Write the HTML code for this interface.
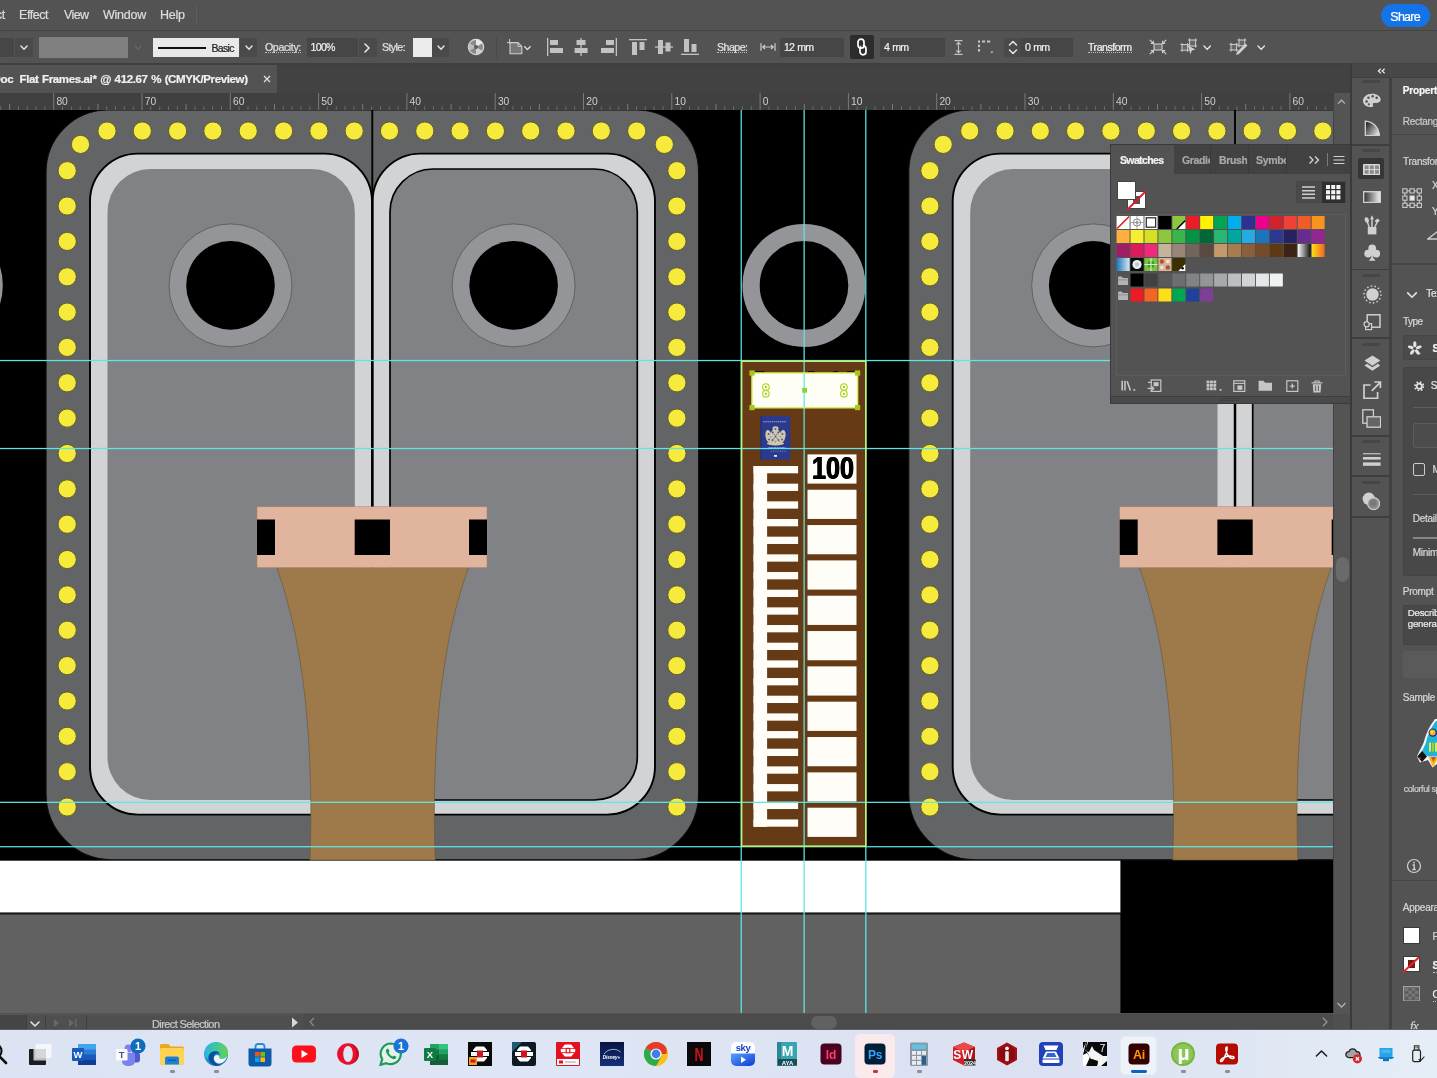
<!DOCTYPE html>
<html lang="en"><head><meta charset="utf-8"><title>Flat Frames.ai</title>
<style>
html,body{margin:0;padding:0}
body{width:1437px;height:1078px;position:relative;overflow:hidden;background:#535353;font-family:"Liberation Sans",sans-serif;color:#dcdcdc;font-size:12px;will-change:transform}
.abs{position:absolute}
div,span,svg{position:absolute;box-sizing:border-box}
.t{white-space:nowrap;line-height:1;-webkit-text-stroke:0.22px}

</style></head>
<body>
<div id="menubar" style="left:0;top:0;width:1437px;height:30px;background:#535353"></div>
<span class="t" style="right:1432.3px;top:8.5px;font-size:12.5px;color:#dcdcdc;letter-spacing:-0.4px">Select</span>
<span class="t" style="left:19px;top:8.5px;font-size:12.5px;color:#dcdcdc;font-weight:normal;letter-spacing:-0.446px;">Effect</span>
<span class="t" style="left:64px;top:8.5px;font-size:12.5px;color:#dcdcdc;font-weight:normal;letter-spacing:-0.622px;">View</span>
<span class="t" style="left:103px;top:8.5px;font-size:12.5px;color:#dcdcdc;font-weight:normal;letter-spacing:-0.231px;">Window</span>
<span class="t" style="left:160px;top:8.5px;font-size:12.5px;color:#dcdcdc;font-weight:normal;letter-spacing:-0.236px;">Help</span>
<div style="left:196px;top:6px;width:1px;height:18px;background:#5e5e5e"></div>
<div style="left:1381px;top:4px;width:49px;height:23px;border-radius:12px;background:#1473e6"></div>
<span class="t" style="left:1390.3px;top:10.7px;font-size:12.5px;color:#ffffff;font-weight:normal;letter-spacing:-0.738px;">Share</span>
<div style="left:0;top:29.6px;width:1437px;height:1.1px;background:#434343"></div>
<div id="controlbar" style="left:0;top:31px;width:1437px;height:34px;background:#535353"></div>
<div style="left:0px;top:38px;width:14px;height:19px;background:#464646;"></div>
<div style="left:15px;top:38px;width:18px;height:19px;background:#4a4a4a;"></div>
<svg style="left:18.5px;top:44.35px" width="10" height="7.3" viewBox="0 0 10 7.3"><path d="M2 2 L5.0 5.3 L8 2" fill="none" stroke="#e6e6e6" stroke-width="1.4" stroke-linecap="round" stroke-linejoin="round"/></svg>
<div style="left:38.5px;top:37.2px;width:89.6px;height:20.6px;background:#808080;"></div>
<svg style="left:133.0px;top:43.85px" width="10" height="7.3" viewBox="0 0 10 7.3"><path d="M2 2 L5.0 5.3 L8 2" fill="none" stroke="#666666" stroke-width="1.4" stroke-linecap="round" stroke-linejoin="round"/></svg>
<div style="left:153px;top:38px;width:86px;height:19px;background:#e9e9e9;"></div>
<div style="left:158px;top:46.5px;width:48px;height:2px;background:#101010;"></div>
<span class="t" style="left:211.5px;top:42.5px;font-size:10.5px;color:#222;font-weight:normal;letter-spacing:-0.669px;">Basic</span>
<div style="left:240px;top:38px;width:17px;height:19px;background:#4a4a4a;"></div>
<svg style="left:243.5px;top:44.35px" width="10" height="7.3" viewBox="0 0 10 7.3"><path d="M2 2 L5.0 5.3 L8 2" fill="none" stroke="#e6e6e6" stroke-width="1.4" stroke-linecap="round" stroke-linejoin="round"/></svg>
<span class="t" style="left:265px;top:41.7px;font-size:10.6px;color:#e0e0e0;font-weight:normal;letter-spacing:-0.368px;border-bottom:1px dotted #bbb;padding-bottom:0px">Opacity:</span>
<div style="left:307px;top:38px;width:51px;height:19px;background:#464646;"></div>
<span class="t" style="left:310.5px;top:41.7px;font-size:10.6px;color:#efefef;font-weight:normal;letter-spacing:-0.703px;">100%</span>
<div style="left:359px;top:38px;width:18px;height:19px;background:#4a4a4a;"></div>
<svg style="left:362.5px;top:41.5px" width="8" height="12" viewBox="0 0 8 12"><path d="M2 2 L6 6.0 L2 10" fill="none" stroke="#e6e6e6" stroke-width="1.6" stroke-linecap="round" stroke-linejoin="round"/></svg>
<span class="t" style="left:382px;top:41.7px;font-size:10.6px;color:#e0e0e0;font-weight:normal;letter-spacing:-0.582px;">Style:</span>
<div style="left:413px;top:38px;width:19px;height:19px;background:#ebebeb;"></div>
<div style="left:432px;top:38px;width:17px;height:19px;background:#4a4a4a;"></div>
<svg style="left:436.0px;top:44.35px" width="10" height="7.3" viewBox="0 0 10 7.3"><path d="M2 2 L5.0 5.3 L8 2" fill="none" stroke="#e6e6e6" stroke-width="1.4" stroke-linecap="round" stroke-linejoin="round"/></svg>
<svg style="left:467px;top:38px" width="18" height="18" viewBox="0 0 18 18"><circle cx="9" cy="9" r="7.6" fill="#8a8a8a" stroke="#d8d8d8" stroke-width="1.3"/><path d="M9 9 L9 1.6 A7.4 7.4 0 0 1 15.4 5.3 Z" fill="#e8e8e8"/><path d="M9 9 L15.4 12.7 A7.4 7.4 0 0 1 9 16.4 Z" fill="#cfcfcf"/><path d="M9 9 L2.6 12.7 A7.4 7.4 0 0 1 2.6 5.3 Z" fill="#bdbdbd"/><circle cx="9" cy="9" r="2" fill="#5a5a5a"/></svg>
<div style="left:495.5px;top:36px;width:1px;height:23px;background:#4b4b4b;"></div>
<svg style="left:505px;top:37px" width="30" height="20" viewBox="0 0 30 20"><path d="M5 5.6 H13 L16.8 9.4 V16.7 H5 Z" fill="#777" stroke="#cdcdcd" stroke-width="1.1"/><path d="M13 5.6 V9.4 H16.8" fill="none" stroke="#cdcdcd" stroke-width="0.9"/><path d="M2 5.6 h4 M4.6 2 v4.6" stroke="#cdcdcd" stroke-width="1"/><path d="M19.2 9.3 L22.4 12.5 L25.6 9.3" fill="none" stroke="#dadada" stroke-width="1.3"/></svg>
<svg style="left:547px;top:37.8px" width="18" height="18" viewBox="0 0 18 18"><rect x="0" y="0" width="1.3" height="18" fill="#c2c2c2"/><rect x="3" y="2" width="8" height="5" fill="#c2c2c2"/><rect x="3" y="10" width="13" height="5" fill="#c2c2c2"/></svg>
<svg style="left:573px;top:37.8px" width="18" height="18" viewBox="0 0 18 18"><rect x="7.4" y="0" width="1.3" height="18" fill="#c2c2c2"/><rect x="3.5" y="2" width="9" height="5" fill="#c2c2c2"/><rect x="1.6" y="10" width="13" height="5" fill="#c2c2c2"/></svg>
<svg style="left:600.6px;top:37.8px" width="18" height="18" viewBox="0 0 18 18"><rect x="14.7" y="0" width="1.3" height="18" fill="#c2c2c2"/><rect x="5" y="2" width="8" height="5" fill="#c2c2c2"/><rect x="0" y="10" width="13" height="5" fill="#c2c2c2"/></svg>
<svg style="left:629px;top:39px" width="18" height="18" viewBox="0 0 18 18"><rect x="0" y="0" width="18" height="1.3" fill="#c2c2c2"/><rect x="3" y="3" width="5" height="13" fill="#c2c2c2"/><rect x="10.5" y="3" width="5" height="8" fill="#c2c2c2"/></svg>
<svg style="left:655px;top:38.2px" width="18" height="18" viewBox="0 0 18 18"><rect x="0" y="8.4" width="18" height="1.3" fill="#c2c2c2"/><rect x="3" y="2" width="5" height="14" fill="#c2c2c2"/><rect x="10.5" y="4.5" width="5" height="9" fill="#c2c2c2"/></svg>
<svg style="left:681px;top:37px" width="18" height="18" viewBox="0 0 18 18"><rect x="0" y="16.7" width="18" height="1.3" fill="#c2c2c2"/><rect x="3" y="2" width="5" height="13" fill="#c2c2c2"/><rect x="10.5" y="7" width="5" height="8" fill="#c2c2c2"/></svg>
<span class="t" style="left:717px;top:41.7px;font-size:10.6px;color:#e0e0e0;font-weight:normal;letter-spacing:-0.519px;border-bottom:1px dotted #bbb;padding-bottom:0px">Shape:</span>
<svg style="left:759.5px;top:42.8px" width="16" height="8" viewBox="0 0 16 8"><path d="M1 0.3 V7.7 M15 0.3 V7.7 M2.5 4 H13.5 M5 1.8 L2.8 4 L5 6.2 M11 1.8 L13.2 4 L11 6.2" fill="none" stroke="#d0d0d0" stroke-width="1.2"/></svg>
<div style="left:780px;top:38px;width:64px;height:19px;background:#464646;"></div>
<span class="t" style="left:784px;top:41.7px;font-size:10.6px;color:#efefef;font-weight:normal;letter-spacing:-0.973px;;word-spacing:1.5px">12 mm</span>
<div style="left:850px;top:35px;width:24px;height:24px;background:#2c2c2c;border-radius:2px"></div>
<svg style="left:855px;top:38px" width="14" height="18" viewBox="0 0 14 18"><rect x="3" y="1.2" width="6" height="9" rx="3" fill="none" stroke="#fff" stroke-width="1.7"/><rect x="5" y="7.8" width="6" height="9" rx="3" fill="none" stroke="#fff" stroke-width="1.7"/><rect x="6.2" y="6.6" width="1.6" height="2.4" fill="#2c2c2c"/></svg>
<div style="left:880px;top:38px;width:65px;height:19px;background:#464646;"></div>
<span class="t" style="left:884px;top:41.7px;font-size:10.6px;color:#efefef;font-weight:normal;letter-spacing:-0.999px;;word-spacing:1.5px">4 mm</span>
<svg style="left:954px;top:40px" width="9" height="15" viewBox="0 0 9 15"><path d="M0.5 0.6 H8.5 M0.5 14.4 H8.5 M4.5 2.2 V12.8 M2.3 4.6 L4.5 2.4 L6.7 4.6 M2.3 10.4 L4.5 12.6 L6.7 10.4" fill="none" stroke="#c4c4c4" stroke-width="1.1"/></svg>
<svg style="left:977px;top:39px" width="18" height="17" viewBox="0 0 18 17"><g fill="#c4c4c4"><rect x="1" y="1.5" width="2" height="2.2"/><rect x="1" y="5.6" width="2" height="2.6"/><rect x="1" y="10" width="2" height="2.6"/><rect x="5" y="1.5" width="3" height="2"/><rect x="10" y="1.5" width="3.2" height="2"/><path d="M13.4 12.6 h3 l-1.5 2 z"/></g></svg>
<div style="left:1004px;top:38px;width:17px;height:19px;background:#4a4a4a;"></div>
<svg style="left:1007px;top:39px" width="12" height="17" viewBox="0 0 12 17"><path d="M2.5 6 L6 2.5 L9.5 6 M2.5 11 L6 14.5 L9.5 11" fill="none" stroke="#e6e6e6" stroke-width="1.5" stroke-linecap="round" stroke-linejoin="round"/></svg>
<div style="left:1021px;top:38px;width:52px;height:19px;background:#464646;"></div>
<span class="t" style="left:1025px;top:41.7px;font-size:10.6px;color:#efefef;font-weight:normal;letter-spacing:-0.999px;;word-spacing:1.5px">0 mm</span>
<span class="t" style="left:1088px;top:41.7px;font-size:10.6px;color:#f2f2f2;font-weight:normal;letter-spacing:-0.487px;border-bottom:1px dotted #bbb;padding-bottom:0px">Transform</span>
<svg style="left:1149px;top:39px" width="18" height="16" viewBox="0 0 18 16"><rect x="5" y="5" width="8" height="6" fill="#6e6e6e" stroke="#d0d0d0" stroke-width="1.1"/><path d="M0.8 0.8 L4.4 4.4 M17.2 0.8 L13.6 4.4 M0.8 15.2 L4.4 11.6 M17.2 15.2 L13.6 11.6" stroke="#d0d0d0" stroke-width="1.2"/><path d="M1.8 4.4 H4.4 V1.8 M16.2 4.4 H13.6 V1.8 M1.8 11.6 H4.4 V14.2 M16.2 11.6 H13.6 V14.2" fill="none" stroke="#d0d0d0" stroke-width="1.1"/></svg>
<svg style="left:1179px;top:37px" width="20" height="20" viewBox="0 0 20 20"><rect x="3" y="7.6" width="5.6" height="5.6" fill="#666" stroke="#d0d0d0" stroke-width="1"/><path d="M1.4 7.6 h1.6 M3 6.0 v1.6 M8.6 6.0 v1.6 M8.6 7.6 h1.6 M1.4 13.2 h1.6 M3 13.2 v1.6 M8.6 13.2 h1.6 M8.6 13.2 v1.6" stroke="#d0d0d0" stroke-width="0.9"/><rect x="10.6" y="3" width="6" height="6" fill="#666" stroke="#d0d0d0" stroke-width="1"/><path d="M9.0 3 h1.6 M10.6 1.4 v1.6 M16.6 1.4 v1.6 M16.6 3 h1.6 M9.0 9 h1.6 M10.6 9 v1.6 M16.6 9 h1.6 M16.6 9 v1.6" stroke="#d0d0d0" stroke-width="0.9"/><path d="M9 8.4 L16.4 12.6 L12.8 13.4 L11.4 17.2 Z" fill="#d0d0d0"/></svg>
<svg style="left:1201.8px;top:43.8px" width="10.4" height="7.4" viewBox="0 0 10.4 7.4"><path d="M2 2 L5.2 5.4 L8.4 2" fill="none" stroke="#e6e6e6" stroke-width="1.4" stroke-linecap="round" stroke-linejoin="round"/></svg>
<svg style="left:1228px;top:37px" width="22" height="20" viewBox="0 0 22 20"><rect x="3" y="7.4" width="5.6" height="5.6" fill="#666" stroke="#d0d0d0" stroke-width="1"/><path d="M1.4 7.4 h1.6 M3 5.800000000000001 v1.6 M8.6 5.800000000000001 v1.6 M8.6 7.4 h1.6 M1.4 13.0 h1.6 M3 13.0 v1.6 M8.6 13.0 h1.6 M8.6 13.0 v1.6" stroke="#d0d0d0" stroke-width="0.9"/><rect x="11" y="3" width="5.8" height="5.8" fill="#666" stroke="#d0d0d0" stroke-width="1"/><path d="M9.4 3 h1.6 M11 1.4 v1.6 M16.8 1.4 v1.6 M16.8 3 h1.6 M9.4 8.8 h1.6 M11 8.8 v1.6 M16.8 8.8 h1.6 M16.8 8.8 v1.6" stroke="#d0d0d0" stroke-width="0.9"/><path d="M17.4 6.6 L19.4 8.6 L11 17 L8 18 L9 15 Z" fill="#d0d0d0"/></svg>
<svg style="left:1255.8px;top:43.8px" width="10.4" height="7.4" viewBox="0 0 10.4 7.4"><path d="M2 2 L5.2 5.4 L8.4 2" fill="none" stroke="#e6e6e6" stroke-width="1.4" stroke-linecap="round" stroke-linejoin="round"/></svg>
<div style="left:0px;top:63px;width:1437px;height:31px;background:#424242;"></div>
<div style="left:0px;top:63px;width:1352px;height:1.6px;background:#3f3f3f;"></div>
<div style="left:0px;top:64.6px;width:277px;height:29px;background:#535353;"></div>
<span class="t" style="left:-7.6px;top:74.4px;font-size:11.5px;color:#f0f0f0;font-weight:bold;letter-spacing:-0.3px;">Doc</span>
<span class="t" style="left:19.5px;top:74.4px;font-size:11.5px;color:#f0f0f0;font-weight:bold;letter-spacing:-0.372px;;word-spacing:0.8px">Flat Frames.ai* @ 412.67 % (CMYK/Preview)</span>
<svg style="left:263.4px;top:75.3px" width="8" height="8" viewBox="0 0 8 8"><path d="M1 1 L7 7 M7 1 L1 7" stroke="#e4e4e4" stroke-width="1.15"/></svg>
<div style="left:0px;top:93.4px;width:1333px;height:16.6px;background:#404040;"></div>
<svg style="left:0;top:93px" width="1333" height="17" viewBox="0 0 1333 17"><rect x="0.2" y="13.5" width="1" height="3.5" fill="#6e6e6e"/><rect x="9.1" y="11" width="1" height="6" fill="#7a7a7a"/><rect x="17.9" y="13.5" width="1" height="3.5" fill="#6e6e6e"/><rect x="26.7" y="13.5" width="1" height="3.5" fill="#6e6e6e"/><rect x="35.5" y="13.5" width="1" height="3.5" fill="#6e6e6e"/><rect x="44.4" y="13.5" width="1" height="3.5" fill="#6e6e6e"/><rect x="53.2" y="0" width="1" height="17" fill="#7a7a7a"/><text x="56.4" y="11.9" font-size="10.3" fill="#cfcfcf" font-family="Liberation Sans, sans-serif">80</text><rect x="62.0" y="13.5" width="1" height="3.5" fill="#6e6e6e"/><rect x="70.9" y="13.5" width="1" height="3.5" fill="#6e6e6e"/><rect x="79.7" y="13.5" width="1" height="3.5" fill="#6e6e6e"/><rect x="88.5" y="13.5" width="1" height="3.5" fill="#6e6e6e"/><rect x="97.4" y="11" width="1" height="6" fill="#7a7a7a"/><rect x="106.2" y="13.5" width="1" height="3.5" fill="#6e6e6e"/><rect x="115.0" y="13.5" width="1" height="3.5" fill="#6e6e6e"/><rect x="123.8" y="13.5" width="1" height="3.5" fill="#6e6e6e"/><rect x="132.7" y="13.5" width="1" height="3.5" fill="#6e6e6e"/><rect x="141.5" y="0" width="1" height="17" fill="#7a7a7a"/><text x="144.7" y="11.9" font-size="10.3" fill="#cfcfcf" font-family="Liberation Sans, sans-serif">70</text><rect x="150.3" y="13.5" width="1" height="3.5" fill="#6e6e6e"/><rect x="159.2" y="13.5" width="1" height="3.5" fill="#6e6e6e"/><rect x="168.0" y="13.5" width="1" height="3.5" fill="#6e6e6e"/><rect x="176.8" y="13.5" width="1" height="3.5" fill="#6e6e6e"/><rect x="185.6" y="11" width="1" height="6" fill="#7a7a7a"/><rect x="194.5" y="13.5" width="1" height="3.5" fill="#6e6e6e"/><rect x="203.3" y="13.5" width="1" height="3.5" fill="#6e6e6e"/><rect x="212.1" y="13.5" width="1" height="3.5" fill="#6e6e6e"/><rect x="221.0" y="13.5" width="1" height="3.5" fill="#6e6e6e"/><rect x="229.8" y="0" width="1" height="17" fill="#7a7a7a"/><text x="233.0" y="11.9" font-size="10.3" fill="#cfcfcf" font-family="Liberation Sans, sans-serif">60</text><rect x="238.6" y="13.5" width="1" height="3.5" fill="#6e6e6e"/><rect x="247.5" y="13.5" width="1" height="3.5" fill="#6e6e6e"/><rect x="256.3" y="13.5" width="1" height="3.5" fill="#6e6e6e"/><rect x="265.1" y="13.5" width="1" height="3.5" fill="#6e6e6e"/><rect x="274.0" y="11" width="1" height="6" fill="#7a7a7a"/><rect x="282.8" y="13.5" width="1" height="3.5" fill="#6e6e6e"/><rect x="291.6" y="13.5" width="1" height="3.5" fill="#6e6e6e"/><rect x="300.4" y="13.5" width="1" height="3.5" fill="#6e6e6e"/><rect x="309.3" y="13.5" width="1" height="3.5" fill="#6e6e6e"/><rect x="318.1" y="0" width="1" height="17" fill="#7a7a7a"/><text x="321.3" y="11.9" font-size="10.3" fill="#cfcfcf" font-family="Liberation Sans, sans-serif">50</text><rect x="326.9" y="13.5" width="1" height="3.5" fill="#6e6e6e"/><rect x="335.8" y="13.5" width="1" height="3.5" fill="#6e6e6e"/><rect x="344.6" y="13.5" width="1" height="3.5" fill="#6e6e6e"/><rect x="353.4" y="13.5" width="1" height="3.5" fill="#6e6e6e"/><rect x="362.2" y="11" width="1" height="6" fill="#7a7a7a"/><rect x="371.1" y="13.5" width="1" height="3.5" fill="#6e6e6e"/><rect x="379.9" y="13.5" width="1" height="3.5" fill="#6e6e6e"/><rect x="388.7" y="13.5" width="1" height="3.5" fill="#6e6e6e"/><rect x="397.6" y="13.5" width="1" height="3.5" fill="#6e6e6e"/><rect x="406.4" y="0" width="1" height="17" fill="#7a7a7a"/><text x="409.6" y="11.9" font-size="10.3" fill="#cfcfcf" font-family="Liberation Sans, sans-serif">40</text><rect x="415.2" y="13.5" width="1" height="3.5" fill="#6e6e6e"/><rect x="424.1" y="13.5" width="1" height="3.5" fill="#6e6e6e"/><rect x="432.9" y="13.5" width="1" height="3.5" fill="#6e6e6e"/><rect x="441.7" y="13.5" width="1" height="3.5" fill="#6e6e6e"/><rect x="450.6" y="11" width="1" height="6" fill="#7a7a7a"/><rect x="459.4" y="13.5" width="1" height="3.5" fill="#6e6e6e"/><rect x="468.2" y="13.5" width="1" height="3.5" fill="#6e6e6e"/><rect x="477.0" y="13.5" width="1" height="3.5" fill="#6e6e6e"/><rect x="485.9" y="13.5" width="1" height="3.5" fill="#6e6e6e"/><rect x="494.7" y="0" width="1" height="17" fill="#7a7a7a"/><text x="497.9" y="11.9" font-size="10.3" fill="#cfcfcf" font-family="Liberation Sans, sans-serif">30</text><rect x="503.5" y="13.5" width="1" height="3.5" fill="#6e6e6e"/><rect x="512.4" y="13.5" width="1" height="3.5" fill="#6e6e6e"/><rect x="521.2" y="13.5" width="1" height="3.5" fill="#6e6e6e"/><rect x="530.0" y="13.5" width="1" height="3.5" fill="#6e6e6e"/><rect x="538.9" y="11" width="1" height="6" fill="#7a7a7a"/><rect x="547.7" y="13.5" width="1" height="3.5" fill="#6e6e6e"/><rect x="556.5" y="13.5" width="1" height="3.5" fill="#6e6e6e"/><rect x="565.3" y="13.5" width="1" height="3.5" fill="#6e6e6e"/><rect x="574.2" y="13.5" width="1" height="3.5" fill="#6e6e6e"/><rect x="583.0" y="0" width="1" height="17" fill="#7a7a7a"/><text x="586.2" y="11.9" font-size="10.3" fill="#cfcfcf" font-family="Liberation Sans, sans-serif">20</text><rect x="591.8" y="13.5" width="1" height="3.5" fill="#6e6e6e"/><rect x="600.7" y="13.5" width="1" height="3.5" fill="#6e6e6e"/><rect x="609.5" y="13.5" width="1" height="3.5" fill="#6e6e6e"/><rect x="618.3" y="13.5" width="1" height="3.5" fill="#6e6e6e"/><rect x="627.2" y="11" width="1" height="6" fill="#7a7a7a"/><rect x="636.0" y="13.5" width="1" height="3.5" fill="#6e6e6e"/><rect x="644.8" y="13.5" width="1" height="3.5" fill="#6e6e6e"/><rect x="653.6" y="13.5" width="1" height="3.5" fill="#6e6e6e"/><rect x="662.5" y="13.5" width="1" height="3.5" fill="#6e6e6e"/><rect x="671.3" y="0" width="1" height="17" fill="#7a7a7a"/><text x="674.5" y="11.9" font-size="10.3" fill="#cfcfcf" font-family="Liberation Sans, sans-serif">10</text><rect x="680.1" y="13.5" width="1" height="3.5" fill="#6e6e6e"/><rect x="689.0" y="13.5" width="1" height="3.5" fill="#6e6e6e"/><rect x="697.8" y="13.5" width="1" height="3.5" fill="#6e6e6e"/><rect x="706.6" y="13.5" width="1" height="3.5" fill="#6e6e6e"/><rect x="715.5" y="11" width="1" height="6" fill="#7a7a7a"/><rect x="724.3" y="13.5" width="1" height="3.5" fill="#6e6e6e"/><rect x="733.1" y="13.5" width="1" height="3.5" fill="#6e6e6e"/><rect x="741.9" y="13.5" width="1" height="3.5" fill="#6e6e6e"/><rect x="750.8" y="13.5" width="1" height="3.5" fill="#6e6e6e"/><rect x="759.6" y="0" width="1" height="17" fill="#7a7a7a"/><text x="762.8" y="11.9" font-size="10.3" fill="#cfcfcf" font-family="Liberation Sans, sans-serif">0</text><rect x="768.4" y="13.5" width="1" height="3.5" fill="#6e6e6e"/><rect x="777.3" y="13.5" width="1" height="3.5" fill="#6e6e6e"/><rect x="786.1" y="13.5" width="1" height="3.5" fill="#6e6e6e"/><rect x="794.9" y="13.5" width="1" height="3.5" fill="#6e6e6e"/><rect x="803.8" y="11" width="1" height="6" fill="#7a7a7a"/><rect x="812.6" y="13.5" width="1" height="3.5" fill="#6e6e6e"/><rect x="821.4" y="13.5" width="1" height="3.5" fill="#6e6e6e"/><rect x="830.2" y="13.5" width="1" height="3.5" fill="#6e6e6e"/><rect x="839.1" y="13.5" width="1" height="3.5" fill="#6e6e6e"/><rect x="847.9" y="0" width="1" height="17" fill="#7a7a7a"/><text x="851.1" y="11.9" font-size="10.3" fill="#cfcfcf" font-family="Liberation Sans, sans-serif">10</text><rect x="856.7" y="13.5" width="1" height="3.5" fill="#6e6e6e"/><rect x="865.6" y="13.5" width="1" height="3.5" fill="#6e6e6e"/><rect x="874.4" y="13.5" width="1" height="3.5" fill="#6e6e6e"/><rect x="883.2" y="13.5" width="1" height="3.5" fill="#6e6e6e"/><rect x="892.0" y="11" width="1" height="6" fill="#7a7a7a"/><rect x="900.9" y="13.5" width="1" height="3.5" fill="#6e6e6e"/><rect x="909.7" y="13.5" width="1" height="3.5" fill="#6e6e6e"/><rect x="918.5" y="13.5" width="1" height="3.5" fill="#6e6e6e"/><rect x="927.4" y="13.5" width="1" height="3.5" fill="#6e6e6e"/><rect x="936.2" y="0" width="1" height="17" fill="#7a7a7a"/><text x="939.4" y="11.9" font-size="10.3" fill="#cfcfcf" font-family="Liberation Sans, sans-serif">20</text><rect x="945.0" y="13.5" width="1" height="3.5" fill="#6e6e6e"/><rect x="953.9" y="13.5" width="1" height="3.5" fill="#6e6e6e"/><rect x="962.7" y="13.5" width="1" height="3.5" fill="#6e6e6e"/><rect x="971.5" y="13.5" width="1" height="3.5" fill="#6e6e6e"/><rect x="980.4" y="11" width="1" height="6" fill="#7a7a7a"/><rect x="989.2" y="13.5" width="1" height="3.5" fill="#6e6e6e"/><rect x="998.0" y="13.5" width="1" height="3.5" fill="#6e6e6e"/><rect x="1006.8" y="13.5" width="1" height="3.5" fill="#6e6e6e"/><rect x="1015.7" y="13.5" width="1" height="3.5" fill="#6e6e6e"/><rect x="1024.5" y="0" width="1" height="17" fill="#7a7a7a"/><text x="1027.7" y="11.9" font-size="10.3" fill="#cfcfcf" font-family="Liberation Sans, sans-serif">30</text><rect x="1033.3" y="13.5" width="1" height="3.5" fill="#6e6e6e"/><rect x="1042.2" y="13.5" width="1" height="3.5" fill="#6e6e6e"/><rect x="1051.0" y="13.5" width="1" height="3.5" fill="#6e6e6e"/><rect x="1059.8" y="13.5" width="1" height="3.5" fill="#6e6e6e"/><rect x="1068.7" y="11" width="1" height="6" fill="#7a7a7a"/><rect x="1077.5" y="13.5" width="1" height="3.5" fill="#6e6e6e"/><rect x="1086.3" y="13.5" width="1" height="3.5" fill="#6e6e6e"/><rect x="1095.1" y="13.5" width="1" height="3.5" fill="#6e6e6e"/><rect x="1104.0" y="13.5" width="1" height="3.5" fill="#6e6e6e"/><rect x="1112.8" y="0" width="1" height="17" fill="#7a7a7a"/><text x="1116.0" y="11.9" font-size="10.3" fill="#cfcfcf" font-family="Liberation Sans, sans-serif">40</text><rect x="1121.6" y="13.5" width="1" height="3.5" fill="#6e6e6e"/><rect x="1130.5" y="13.5" width="1" height="3.5" fill="#6e6e6e"/><rect x="1139.3" y="13.5" width="1" height="3.5" fill="#6e6e6e"/><rect x="1148.1" y="13.5" width="1" height="3.5" fill="#6e6e6e"/><rect x="1157.0" y="11" width="1" height="6" fill="#7a7a7a"/><rect x="1165.8" y="13.5" width="1" height="3.5" fill="#6e6e6e"/><rect x="1174.6" y="13.5" width="1" height="3.5" fill="#6e6e6e"/><rect x="1183.4" y="13.5" width="1" height="3.5" fill="#6e6e6e"/><rect x="1192.3" y="13.5" width="1" height="3.5" fill="#6e6e6e"/><rect x="1201.1" y="0" width="1" height="17" fill="#7a7a7a"/><text x="1204.3" y="11.9" font-size="10.3" fill="#cfcfcf" font-family="Liberation Sans, sans-serif">50</text><rect x="1209.9" y="13.5" width="1" height="3.5" fill="#6e6e6e"/><rect x="1218.8" y="13.5" width="1" height="3.5" fill="#6e6e6e"/><rect x="1227.6" y="13.5" width="1" height="3.5" fill="#6e6e6e"/><rect x="1236.4" y="13.5" width="1" height="3.5" fill="#6e6e6e"/><rect x="1245.2" y="11" width="1" height="6" fill="#7a7a7a"/><rect x="1254.1" y="13.5" width="1" height="3.5" fill="#6e6e6e"/><rect x="1262.9" y="13.5" width="1" height="3.5" fill="#6e6e6e"/><rect x="1271.7" y="13.5" width="1" height="3.5" fill="#6e6e6e"/><rect x="1280.6" y="13.5" width="1" height="3.5" fill="#6e6e6e"/><rect x="1289.4" y="0" width="1" height="17" fill="#7a7a7a"/><text x="1292.6" y="11.9" font-size="10.3" fill="#cfcfcf" font-family="Liberation Sans, sans-serif">60</text><rect x="1298.2" y="13.5" width="1" height="3.5" fill="#6e6e6e"/><rect x="1307.1" y="13.5" width="1" height="3.5" fill="#6e6e6e"/><rect x="1315.9" y="13.5" width="1" height="3.5" fill="#6e6e6e"/><rect x="1324.7" y="13.5" width="1" height="3.5" fill="#6e6e6e"/></svg>
<svg id="canvas" style="left:0;top:110px" width="1333" height="903" viewBox="0 110 1333 903"><rect x="0" y="110" width="1333" height="903" fill="#000"/><defs><g id="frame"><path d="M108 110 H636.6 A62 62 0 0 1 698.6 172 V793.8 A66 66 0 0 1 632.6 859.8 H112 A66 66 0 0 1 46 793.8 V172 A62 62 0 0 1 108 110 Z" fill="#636466" stroke="#0c0c0c" stroke-width="1.2"/><circle cx="107.0" cy="131.0" r="9.1" fill="#f6eb3c" stroke="#5f5a22" stroke-width="0.9"/><circle cx="142.3" cy="131.0" r="9.1" fill="#f6eb3c" stroke="#5f5a22" stroke-width="0.9"/><circle cx="177.6" cy="131.0" r="9.1" fill="#f6eb3c" stroke="#5f5a22" stroke-width="0.9"/><circle cx="212.9" cy="131.0" r="9.1" fill="#f6eb3c" stroke="#5f5a22" stroke-width="0.9"/><circle cx="248.2" cy="131.0" r="9.1" fill="#f6eb3c" stroke="#5f5a22" stroke-width="0.9"/><circle cx="283.6" cy="131.0" r="9.1" fill="#f6eb3c" stroke="#5f5a22" stroke-width="0.9"/><circle cx="318.9" cy="131.0" r="9.1" fill="#f6eb3c" stroke="#5f5a22" stroke-width="0.9"/><circle cx="354.2" cy="131.0" r="9.1" fill="#f6eb3c" stroke="#5f5a22" stroke-width="0.9"/><circle cx="389.5" cy="131.0" r="9.1" fill="#f6eb3c" stroke="#5f5a22" stroke-width="0.9"/><circle cx="424.8" cy="131.0" r="9.1" fill="#f6eb3c" stroke="#5f5a22" stroke-width="0.9"/><circle cx="460.1" cy="131.0" r="9.1" fill="#f6eb3c" stroke="#5f5a22" stroke-width="0.9"/><circle cx="495.4" cy="131.0" r="9.1" fill="#f6eb3c" stroke="#5f5a22" stroke-width="0.9"/><circle cx="530.7" cy="131.0" r="9.1" fill="#f6eb3c" stroke="#5f5a22" stroke-width="0.9"/><circle cx="566.0" cy="131.0" r="9.1" fill="#f6eb3c" stroke="#5f5a22" stroke-width="0.9"/><circle cx="601.3" cy="131.0" r="9.1" fill="#f6eb3c" stroke="#5f5a22" stroke-width="0.9"/><circle cx="636.7" cy="131.0" r="9.1" fill="#f6eb3c" stroke="#5f5a22" stroke-width="0.9"/><circle cx="80.5" cy="144.4" r="9.1" fill="#f6eb3c" stroke="#5f5a22" stroke-width="0.9"/><circle cx="664.3" cy="144.4" r="9.1" fill="#f6eb3c" stroke="#5f5a22" stroke-width="0.9"/><circle cx="67.2" cy="170.7" r="9.1" fill="#f6eb3c" stroke="#5f5a22" stroke-width="0.9"/><circle cx="676.9" cy="170.7" r="9.1" fill="#f6eb3c" stroke="#5f5a22" stroke-width="0.9"/><circle cx="67.2" cy="206.0" r="9.1" fill="#f6eb3c" stroke="#5f5a22" stroke-width="0.9"/><circle cx="676.9" cy="206.0" r="9.1" fill="#f6eb3c" stroke="#5f5a22" stroke-width="0.9"/><circle cx="67.2" cy="241.4" r="9.1" fill="#f6eb3c" stroke="#5f5a22" stroke-width="0.9"/><circle cx="676.9" cy="241.4" r="9.1" fill="#f6eb3c" stroke="#5f5a22" stroke-width="0.9"/><circle cx="67.2" cy="276.8" r="9.1" fill="#f6eb3c" stroke="#5f5a22" stroke-width="0.9"/><circle cx="676.9" cy="276.8" r="9.1" fill="#f6eb3c" stroke="#5f5a22" stroke-width="0.9"/><circle cx="67.2" cy="312.1" r="9.1" fill="#f6eb3c" stroke="#5f5a22" stroke-width="0.9"/><circle cx="676.9" cy="312.1" r="9.1" fill="#f6eb3c" stroke="#5f5a22" stroke-width="0.9"/><circle cx="67.2" cy="347.4" r="9.1" fill="#f6eb3c" stroke="#5f5a22" stroke-width="0.9"/><circle cx="676.9" cy="347.4" r="9.1" fill="#f6eb3c" stroke="#5f5a22" stroke-width="0.9"/><circle cx="67.2" cy="382.8" r="9.1" fill="#f6eb3c" stroke="#5f5a22" stroke-width="0.9"/><circle cx="676.9" cy="382.8" r="9.1" fill="#f6eb3c" stroke="#5f5a22" stroke-width="0.9"/><circle cx="67.2" cy="418.1" r="9.1" fill="#f6eb3c" stroke="#5f5a22" stroke-width="0.9"/><circle cx="676.9" cy="418.1" r="9.1" fill="#f6eb3c" stroke="#5f5a22" stroke-width="0.9"/><circle cx="67.2" cy="453.5" r="9.1" fill="#f6eb3c" stroke="#5f5a22" stroke-width="0.9"/><circle cx="676.9" cy="453.5" r="9.1" fill="#f6eb3c" stroke="#5f5a22" stroke-width="0.9"/><circle cx="67.2" cy="488.9" r="9.1" fill="#f6eb3c" stroke="#5f5a22" stroke-width="0.9"/><circle cx="676.9" cy="488.9" r="9.1" fill="#f6eb3c" stroke="#5f5a22" stroke-width="0.9"/><circle cx="67.2" cy="524.2" r="9.1" fill="#f6eb3c" stroke="#5f5a22" stroke-width="0.9"/><circle cx="676.9" cy="524.2" r="9.1" fill="#f6eb3c" stroke="#5f5a22" stroke-width="0.9"/><circle cx="67.2" cy="559.5" r="9.1" fill="#f6eb3c" stroke="#5f5a22" stroke-width="0.9"/><circle cx="676.9" cy="559.5" r="9.1" fill="#f6eb3c" stroke="#5f5a22" stroke-width="0.9"/><circle cx="67.2" cy="594.9" r="9.1" fill="#f6eb3c" stroke="#5f5a22" stroke-width="0.9"/><circle cx="676.9" cy="594.9" r="9.1" fill="#f6eb3c" stroke="#5f5a22" stroke-width="0.9"/><circle cx="67.2" cy="630.2" r="9.1" fill="#f6eb3c" stroke="#5f5a22" stroke-width="0.9"/><circle cx="676.9" cy="630.2" r="9.1" fill="#f6eb3c" stroke="#5f5a22" stroke-width="0.9"/><circle cx="67.2" cy="665.6" r="9.1" fill="#f6eb3c" stroke="#5f5a22" stroke-width="0.9"/><circle cx="676.9" cy="665.6" r="9.1" fill="#f6eb3c" stroke="#5f5a22" stroke-width="0.9"/><circle cx="67.2" cy="701.0" r="9.1" fill="#f6eb3c" stroke="#5f5a22" stroke-width="0.9"/><circle cx="676.9" cy="701.0" r="9.1" fill="#f6eb3c" stroke="#5f5a22" stroke-width="0.9"/><circle cx="67.2" cy="736.3" r="9.1" fill="#f6eb3c" stroke="#5f5a22" stroke-width="0.9"/><circle cx="676.9" cy="736.3" r="9.1" fill="#f6eb3c" stroke="#5f5a22" stroke-width="0.9"/><circle cx="67.2" cy="771.7" r="9.1" fill="#f6eb3c" stroke="#5f5a22" stroke-width="0.9"/><circle cx="676.9" cy="771.7" r="9.1" fill="#f6eb3c" stroke="#5f5a22" stroke-width="0.9"/><circle cx="67.2" cy="807.0" r="9.1" fill="#f6eb3c" stroke="#5f5a22" stroke-width="0.9"/><circle cx="676.9" cy="807.0" r="9.1" fill="#f6eb3c" stroke="#5f5a22" stroke-width="0.9"/><rect x="90" y="153.6" width="282" height="661" rx="48" ry="48" fill="#d1d3d4" stroke="#000" stroke-width="1.9"/><rect x="372.6" y="153.6" width="282.4" height="661" rx="48" ry="48" fill="#d1d3d4" stroke="#000" stroke-width="1.9"/><rect x="107.5" y="169" width="247.3" height="631" rx="43" ry="43" fill="#808285"/><rect x="390" y="169" width="247.3" height="631" rx="43" ry="43" fill="#808285" stroke="#000" stroke-width="1.7"/><path d="M372.3 110 V507" stroke="#000" stroke-width="1.9"/><circle cx="230.5" cy="285.4" r="61.5" fill="#939598" stroke="#55565a" stroke-width="0.8"/><circle cx="230.5" cy="285.4" r="44.3" fill="#000"/><circle cx="513.6" cy="285.4" r="61.5" fill="#939598" stroke="#55565a" stroke-width="0.8"/><circle cx="513.6" cy="285.4" r="44.3" fill="#000"/><path d="M276.8 567.6 L284.2 590.1 L290.4 612.6 L295.5 635.1 L299.6 657.6 L302.9 680.1 L305.6 702.6 L307.6 725.0 L309.1 747.5 L310.1 770.0 L310.7 792.5 L310.9 815.0 L310.7 837.5 L310.0 860.0 L435.2 860.0 L434.5 837.5 L434.3 815.0 L434.5 792.5 L435.1 770.0 L436.1 747.5 L437.6 725.0 L439.6 702.6 L442.3 680.1 L445.6 657.6 L449.7 635.1 L454.8 612.6 L461.0 590.1 L468.4 567.6 Z" fill="#9e7a4b" stroke="#6a5434" stroke-width="0.6" stroke-linejoin="round"/><rect x="257" y="506.8" width="230" height="60.8" fill="#e0b49d" stroke="#a88370" stroke-width="0.5"/><rect x="257" y="519.5" width="18" height="35.5" fill="#000"/><rect x="354.7" y="519.5" width="35.3" height="35.5" fill="#000"/><rect x="469" y="519.5" width="18" height="35.5" fill="#000"/></g></defs><use href="#frame" x="0" y="0"/><use href="#frame" x="862.7" y="0"/><circle cx="804" cy="285.4" r="52.9" fill="none" stroke="#939598" stroke-width="17.2"/><circle cx="-58.7" cy="285.4" r="52.9" fill="none" stroke="#939598" stroke-width="17.2"/><rect x="0" y="860.7" width="1120.4" height="52" fill="#fff"/><rect x="0" y="912.6" width="1120.4" height="1.9" fill="#1a1a1a"/><rect x="0" y="914.5" width="1120.4" height="99" fill="#616161"/><rect x="741.5" y="361" width="124.5" height="485.5" fill="#663a14"/><rect x="752" y="373" width="105.6" height="34.6" rx="3" ry="3" fill="#fffef6"/><rect x="760.4" y="415.8" width="30" height="43.8" fill="#2b3a8d"/><rect x="760.4" y="415.8" width="1.6" height="43.8" fill="#26337c"/><path d="M763.2 421.8 H786" stroke="#98a2d4" stroke-width="1.1" stroke-dasharray="1.6 0.5"/><g fill="#cfc8aa"><ellipse cx="775.5" cy="436.3" rx="5.2" ry="7.6"/><ellipse cx="768.8" cy="436.5" rx="3.2" ry="6.6" transform="rotate(-12 768.8 436.5)"/><ellipse cx="782.2" cy="436.5" rx="3.2" ry="6.6" transform="rotate(12 782.2 436.5)"/><ellipse cx="775.5" cy="428.6" rx="3" ry="2.4"/><ellipse cx="775.5" cy="443.6" rx="8.6" ry="1.8"/></g><g fill="#4a5596"><circle cx="772.8" cy="432.5" r="0.95"/><circle cx="778.2" cy="432.5" r="0.95"/><circle cx="775.5" cy="436.5" r="0.95"/><circle cx="772.6" cy="440" r="0.95"/><circle cx="778.4" cy="440" r="0.95"/><circle cx="768.6" cy="434" r="0.95"/><circle cx="782.4" cy="434" r="0.95"/><circle cx="769" cy="439.5" r="0.95"/><circle cx="782" cy="439.5" r="0.95"/><circle cx="775.5" cy="429" r="0.95"/></g><g fill="#8a84a0"><circle cx="774.2" cy="434.6" r="0.8"/><circle cx="776.8" cy="434.6" r="0.8"/><circle cx="774" cy="438.2" r="0.8"/><circle cx="777" cy="438.2" r="0.8"/><circle cx="770.6" cy="436.8" r="0.8"/><circle cx="780.4" cy="436.8" r="0.8"/><circle cx="775.5" cy="441.6" r="0.8"/></g><path d="M768.4 447.9 H785.6" stroke="#a0a8d8" stroke-width="1.2" stroke-dasharray="2.2 0.5"/><path d="M771 451.3 H786" stroke="#7680bc" stroke-width="0.9" stroke-dasharray="1.2 1"/><rect x="774" y="455" width="3" height="1.8" fill="#e4e6f4"/><rect x="753.5" y="466" width="13.6" height="360.8" fill="#fffdf7"/><rect x="753.5" y="466.00" width="44.6" height="7.3" fill="#fffdf7"/><rect x="753.5" y="483.67" width="44.6" height="7.3" fill="#fffdf7"/><rect x="753.5" y="501.34" width="44.6" height="7.3" fill="#fffdf7"/><rect x="753.5" y="519.01" width="44.6" height="7.3" fill="#fffdf7"/><rect x="753.5" y="536.68" width="44.6" height="7.3" fill="#fffdf7"/><rect x="753.5" y="554.35" width="44.6" height="7.3" fill="#fffdf7"/><rect x="753.5" y="572.02" width="44.6" height="7.3" fill="#fffdf7"/><rect x="753.5" y="589.69" width="44.6" height="7.3" fill="#fffdf7"/><rect x="753.5" y="607.36" width="44.6" height="7.3" fill="#fffdf7"/><rect x="753.5" y="625.03" width="44.6" height="7.3" fill="#fffdf7"/><rect x="753.5" y="642.70" width="44.6" height="7.3" fill="#fffdf7"/><rect x="753.5" y="660.37" width="44.6" height="7.3" fill="#fffdf7"/><rect x="753.5" y="678.04" width="44.6" height="7.3" fill="#fffdf7"/><rect x="753.5" y="695.71" width="44.6" height="7.3" fill="#fffdf7"/><rect x="753.5" y="713.38" width="44.6" height="7.3" fill="#fffdf7"/><rect x="753.5" y="731.05" width="44.6" height="7.3" fill="#fffdf7"/><rect x="753.5" y="748.72" width="44.6" height="7.3" fill="#fffdf7"/><rect x="753.5" y="766.39" width="44.6" height="7.3" fill="#fffdf7"/><rect x="753.5" y="784.06" width="44.6" height="7.3" fill="#fffdf7"/><rect x="753.5" y="801.73" width="44.6" height="7.3" fill="#fffdf7"/><rect x="753.5" y="819.40" width="44.6" height="7.3" fill="#fffdf7"/><rect x="807.5" y="454.40" width="49" height="29.2" fill="#fffdf7"/><rect x="807.5" y="489.73" width="49" height="29.2" fill="#fffdf7"/><rect x="807.5" y="525.06" width="49" height="29.2" fill="#fffdf7"/><rect x="807.5" y="560.39" width="49" height="29.2" fill="#fffdf7"/><rect x="807.5" y="595.72" width="49" height="29.2" fill="#fffdf7"/><rect x="807.5" y="631.05" width="49" height="29.2" fill="#fffdf7"/><rect x="807.5" y="666.38" width="49" height="29.2" fill="#fffdf7"/><rect x="807.5" y="701.71" width="49" height="29.2" fill="#fffdf7"/><rect x="807.5" y="737.04" width="49" height="29.2" fill="#fffdf7"/><rect x="807.5" y="772.37" width="49" height="29.2" fill="#fffdf7"/><rect x="807.5" y="807.70" width="49" height="29.2" fill="#fffdf7"/><rect x="0" y="359.9" width="1333" height="1.25" fill="#5ce6e6"/><rect x="0" y="447.9" width="1333" height="1.25" fill="#5ce6e6"/><rect x="0" y="801.6999999999999" width="1333" height="1.25" fill="#5ce6e6"/><rect x="0" y="846.1" width="1333" height="1.25" fill="#5ce6e6"/><rect x="740.6" y="110" width="1.25" height="903" fill="#5ce6e6"/><rect x="803.5" y="110" width="1.25" height="903" fill="#5ce6e6"/><rect x="865.1999999999999" y="110" width="1.25" height="903" fill="#5ce6e6"/><rect x="741.6" y="361.2" width="124.2" height="485" fill="none" stroke="#bdf07a" stroke-width="1.6"/><path d="M755.5 371.6 h9 M808 371.6 h6.5 M833 371.6 h5 M847 371.6 h7" stroke="#141008" stroke-width="1.3"/><rect x="752" y="373" width="105.6" height="34.8" rx="2.5" ry="2.5" fill="none" stroke="#d8f25e" stroke-width="1.5"/><rect x="749.4" y="370.4" width="5.2" height="5.2" fill="#a4c81e"/><rect x="855.0" y="370.4" width="5.2" height="5.2" fill="#a4c81e"/><rect x="749.4" y="405.0" width="5.2" height="5.2" fill="#a4c81e"/><rect x="855.0" y="405.0" width="5.2" height="5.2" fill="#a4c81e"/><rect x="802.2" y="387.9" width="4.8" height="4.8" fill="#8ccf3c"/><circle cx="765.9" cy="387" r="3.3" fill="#fbfde0" stroke="#a8d41e" stroke-width="1.1"/><circle cx="765.9" cy="387" r="1.15" fill="#9ccc2a"/><circle cx="765.9" cy="393.8" r="3.3" fill="#fbfde0" stroke="#a8d41e" stroke-width="1.1"/><circle cx="765.9" cy="393.8" r="1.15" fill="#9ccc2a"/><circle cx="843.9" cy="387" r="3.3" fill="#fbfde0" stroke="#a8d41e" stroke-width="1.1"/><circle cx="843.9" cy="387" r="1.15" fill="#9ccc2a"/><circle cx="843.9" cy="393.8" r="3.3" fill="#fbfde0" stroke="#a8d41e" stroke-width="1.1"/><circle cx="843.9" cy="393.8" r="1.15" fill="#9ccc2a"/></svg>
<span class="t" style="left:811.8px;top:453.8px;font-size:30.7px;font-weight:bold;color:#000;transform-origin:0 0;transform:scaleX(0.82);text-shadow:0.7px 0 0 #000,-0.7px 0 0 #000">100</span>
<div style="left:1333px;top:93.4px;width:17px;height:937px;background:#545454;"></div>
<div style="left:1333px;top:93.4px;width:1.2px;height:920px;background:#414141;"></div>
<div style="left:1349.5px;top:65px;width:2.5px;height:965px;background:#3a3a3a;"></div>
<svg style="left:1336.3px;top:98px" width="11" height="8" viewBox="0 0 11 8"><path d="M2 5.6 L5.5 2.2 L9 5.6" fill="none" stroke="#b4b4b4" stroke-width="1.3"/></svg>
<svg style="left:1336px;top:1001px" width="11" height="8" viewBox="0 0 11 8"><path d="M1.5 2 L5.5 6 L9.5 2" fill="none" stroke="#b0b0b0" stroke-width="1.3"/></svg>
<div style="left:1336px;top:557px;width:13px;height:25px;background:#6a6a6a;border-radius:7px"></div>
<div style="left:1109.5px;top:144px;width:241px;height:260.3px;background:#3a3a3a;"></div>
<div style="left:1110.5px;top:145px;width:239px;height:252px;background:#535353;"></div>
<div style="left:1110.5px;top:145px;width:239px;height:28.5px;background:#424242;"></div>
<div style="left:1110.5px;top:145px;width:63px;height:29px;background:#535353;"></div>
<div style="left:1210px;top:145px;width:1px;height:28px;background:#3b3b3b;"></div>
<div style="left:1247.5px;top:145px;width:1px;height:28px;background:#3b3b3b;"></div>
<div style="left:1285.5px;top:145px;width:1px;height:28px;background:#3b3b3b;"></div>
<span class="t" style="left:1120px;top:155px;font-size:10.5px;color:#f2f2f2;font-weight:bold;letter-spacing:-0.634px;">Swatches</span>
<div style="left:1182px;top:147px;width:27.5px;height:24px;overflow:hidden"><span class="t" style="left:0;top:8px;font-size:10.5px;font-weight:bold;color:#a8a8a8;letter-spacing:-0.35px">Gradient</span></div>
<div style="left:1219px;top:147px;width:28px;height:24px;overflow:hidden"><span class="t" style="left:0;top:8px;font-size:10.5px;font-weight:bold;color:#a8a8a8;letter-spacing:-0.35px">Brushes</span></div>
<div style="left:1256px;top:147px;width:29.5px;height:24px;overflow:hidden"><span class="t" style="left:0;top:8px;font-size:10.5px;font-weight:bold;color:#a8a8a8;letter-spacing:-0.35px">Symbols</span></div>
<svg style="left:1308px;top:155px" width="13" height="10" viewBox="0 0 13 10"><path d="M1.5 1.5 L5 5 L1.5 8.5 M7 1.5 L10.5 5 L7 8.5" fill="none" stroke="#d8d8d8" stroke-width="1.3"/></svg>
<div style="left:1326.5px;top:153px;width:1px;height:13px;background:#7c7c7c;"></div>
<svg style="left:1333px;top:155px" width="12" height="10" viewBox="0 0 12 10"><path d="M0.5 1.5 H11.5 M0.5 5 H11.5 M0.5 8.5 H11.5" stroke="#cfcfcf" stroke-width="1.2"/></svg>
<div style="left:1127px;top:190.5px;width:18.5px;height:18.5px;background:#fff;border:1px solid #444"></div>
<div style="left:1132.5px;top:196px;width:7.5px;height:7.5px;background:#535353;"></div>
<svg style="left:1126px;top:189.5px" width="21" height="21" viewBox="0 0 21 21"><path d="M1 20 L20 1" stroke="#e01b24" stroke-width="1.8"/></svg>
<div style="left:1116.5px;top:180.5px;width:19px;height:19px;background:#fff;border:1px solid #444"></div>
<div style="left:1296px;top:181px;width:50px;height:22px;background:#4a4a4a;border:1px solid #474747"></div>
<div style="left:1321.5px;top:181.5px;width:23px;height:21px;background:#2f2f2f;"></div>
<svg style="left:1301px;top:185px" width="15" height="15" viewBox="0 0 15 15"><path d="M1 2 H14 M1 5.7 H14 M1 9.3 H14 M1 13 H14" stroke="#d0d0d0" stroke-width="1.4"/></svg>
<svg style="left:1326px;top:185px" width="15" height="15" viewBox="0 0 15 15"><rect x="0.0" y="0.0" width="4" height="4" fill="#f4f4f4"/><rect x="5.2" y="0.0" width="4" height="4" fill="#f4f4f4"/><rect x="10.4" y="0.0" width="4" height="4" fill="#f4f4f4"/><rect x="0.0" y="5.2" width="4" height="4" fill="#f4f4f4"/><rect x="5.2" y="5.2" width="4" height="4" fill="#f4f4f4"/><rect x="10.4" y="5.2" width="4" height="4" fill="#f4f4f4"/><rect x="0.0" y="10.4" width="4" height="4" fill="#f4f4f4"/><rect x="5.2" y="10.4" width="4" height="4" fill="#f4f4f4"/><rect x="10.4" y="10.4" width="4" height="4" fill="#f4f4f4"/></svg>
<div style="left:1116px;top:213.5px;width:230px;height:162px;background:transparent;border:1px solid #5c5c5c"></div>
<svg style="left:0;top:0" width="1437" height="320" viewBox="0 0 1437 320"><defs><linearGradient id="gw"><stop offset="0" stop-color="#fff"/><stop offset="1" stop-color="#111"/></linearGradient><linearGradient id="gy"><stop offset="0" stop-color="#ffde17"/><stop offset="1" stop-color="#f26522"/></linearGradient><linearGradient id="gb"><stop offset="0" stop-color="#1c75bc"/><stop offset="1" stop-color="#d6e9f8"/></linearGradient></defs><rect x="1116.60" y="216" width="13.0" height="13.0" fill="#fff"/><rect x="1130.53" y="216" width="13.0" height="13.0" fill="#fff"/><rect x="1144.46" y="216" width="13.0" height="13.0" fill="#fff"/><rect x="1158.39" y="216" width="13.0" height="13.0" fill="#000"/><rect x="1172.32" y="216" width="13.0" height="13.0" fill="#8dc63f"/><rect x="1186.25" y="216" width="13.0" height="13.0" fill="#ed1c24"/><rect x="1200.18" y="216" width="13.0" height="13.0" fill="#fff200"/><rect x="1214.11" y="216" width="13.0" height="13.0" fill="#00a651"/><rect x="1228.04" y="216" width="13.0" height="13.0" fill="#00aeef"/><rect x="1241.97" y="216" width="13.0" height="13.0" fill="#2e3192"/><rect x="1255.90" y="216" width="13.0" height="13.0" fill="#ec008c"/><rect x="1269.83" y="216" width="13.0" height="13.0" fill="#d2232a"/><rect x="1283.76" y="216" width="13.0" height="13.0" fill="#ef4136"/><rect x="1297.69" y="216" width="13.0" height="13.0" fill="#f15a29"/><rect x="1311.62" y="216" width="13.0" height="13.0" fill="#f7941e"/><rect x="1116.60" y="230" width="13.0" height="13.0" fill="#fbb040"/><rect x="1130.53" y="230" width="13.0" height="13.0" fill="#f9ed32"/><rect x="1144.46" y="230" width="13.0" height="13.0" fill="#d7df23"/><rect x="1158.39" y="230" width="13.0" height="13.0" fill="#8dc63f"/><rect x="1172.32" y="230" width="13.0" height="13.0" fill="#39b54a"/><rect x="1186.25" y="230" width="13.0" height="13.0" fill="#009444"/><rect x="1200.18" y="230" width="13.0" height="13.0" fill="#006838"/><rect x="1214.11" y="230" width="13.0" height="13.0" fill="#2bb673"/><rect x="1228.04" y="230" width="13.0" height="13.0" fill="#00a79d"/><rect x="1241.97" y="230" width="13.0" height="13.0" fill="#27aae1"/><rect x="1255.90" y="230" width="13.0" height="13.0" fill="#1c75bc"/><rect x="1269.83" y="230" width="13.0" height="13.0" fill="#2b3990"/><rect x="1283.76" y="230" width="13.0" height="13.0" fill="#262262"/><rect x="1297.69" y="230" width="13.0" height="13.0" fill="#662d91"/><rect x="1311.62" y="230" width="13.0" height="13.0" fill="#92278f"/><rect x="1116.60" y="244" width="13.0" height="13.0" fill="#9e1f63"/><rect x="1130.53" y="244" width="13.0" height="13.0" fill="#da1c5c"/><rect x="1144.46" y="244" width="13.0" height="13.0" fill="#ee2a7b"/><rect x="1158.39" y="244" width="13.0" height="13.0" fill="#c2b59b"/><rect x="1172.32" y="244" width="13.0" height="13.0" fill="#9b8579"/><rect x="1186.25" y="244" width="13.0" height="13.0" fill="#726658"/><rect x="1200.18" y="244" width="13.0" height="13.0" fill="#594a42"/><rect x="1214.11" y="244" width="13.0" height="13.0" fill="#c49a6c"/><rect x="1228.04" y="244" width="13.0" height="13.0" fill="#a97c50"/><rect x="1241.97" y="244" width="13.0" height="13.0" fill="#8b5e3c"/><rect x="1255.90" y="244" width="13.0" height="13.0" fill="#754c29"/><rect x="1269.83" y="244" width="13.0" height="13.0" fill="#603913"/><rect x="1283.76" y="244" width="13.0" height="13.0" fill="#3c2415"/><rect x="1297.69" y="244" width="13.0" height="13.0" fill="url(#gw)"/><rect x="1311.62" y="244" width="13.0" height="13.0" fill="url(#gy)"/><path d="M1117.1 228.5 L1129.1 216.5" stroke="#e01b24" stroke-width="1.6"/><circle cx="1137.03" cy="222.5" r="3.6" fill="none" stroke="#666" stroke-width="0.8"/><path d="M1137.03 216 v13 M1130.53 222.5 h13" stroke="#888" stroke-width="0.7"/><circle cx="1137.03" cy="222.5" r="1.5" fill="#999"/><rect x="1146.2599999999998" y="217.8" width="9.4" height="9.4" fill="#fff" stroke="#222" stroke-width="1.2"/><path d="M1185.32 220 V229 H1176.32 Z" fill="#fff"/><path d="M1176.82 229 L1185.32 220.5" stroke="#000" stroke-width="1.6"/><rect x="1116.60" y="258" width="13.0" height="13.0" fill="url(#gb)"/><rect x="1130.53" y="258" width="13.0" height="13.0" fill="#0a0a0a"/><circle cx="1137.03" cy="264.5" r="4.6" fill="#e8f0f0"/><circle cx="1137.03" cy="264.5" r="2.2" fill="#b8d0d4"/><rect x="1144.46" y="258" width="13.0" height="13.0" fill="#7cc242"/><rect x="1147.9599999999998" y="261.5" width="6" height="6" fill="#3a9a3a"/><path d="M1144.4599999999998 264.5 h13 M1150.9599999999998 258 v13" stroke="#d8f0b0" stroke-width="1.2"/><rect x="1158.39" y="258" width="13.0" height="13.0" fill="#d8b49a"/><circle cx="1161.8899999999999" cy="261.5" r="2.2" fill="#b5532f"/><circle cx="1167.8899999999999" cy="267.5" r="2.2" fill="#b5532f"/><circle cx="1167.8899999999999" cy="261.5" r="1.8" fill="#f4e4d4"/><circle cx="1161.8899999999999" cy="267.5" r="1.8" fill="#f4e4d4"/><rect x="1172.32" y="258" width="13.0" height="13.0" fill="#3b3000"/><path d="M1185.32 264 V271 H1178.32 Z" fill="#fff"/><circle cx="1182.62" cy="268.3" r="1.3" fill="#000"/><rect x="1130.53" y="273.5" width="13.0" height="13.0" fill="#000"/><rect x="1144.46" y="273.5" width="13.0" height="13.0" fill="#414042"/><rect x="1158.39" y="273.5" width="13.0" height="13.0" fill="#58595b"/><rect x="1172.32" y="273.5" width="13.0" height="13.0" fill="#6d6e71"/><rect x="1186.25" y="273.5" width="13.0" height="13.0" fill="#808285"/><rect x="1200.18" y="273.5" width="13.0" height="13.0" fill="#939598"/><rect x="1214.11" y="273.5" width="13.0" height="13.0" fill="#a7a9ac"/><rect x="1228.04" y="273.5" width="13.0" height="13.0" fill="#bcbec0"/><rect x="1241.97" y="273.5" width="13.0" height="13.0" fill="#d1d3d4"/><rect x="1255.90" y="273.5" width="13.0" height="13.0" fill="#e6e7e8"/><rect x="1269.83" y="273.5" width="13.0" height="13.0" fill="#f1f2f2"/><rect x="1130.53" y="288.5" width="13.0" height="13.0" fill="#ed1c24"/><rect x="1144.46" y="288.5" width="13.0" height="13.0" fill="#f26522"/><rect x="1158.39" y="288.5" width="13.0" height="13.0" fill="#ffde17"/><rect x="1172.32" y="288.5" width="13.0" height="13.0" fill="#00a651"/><rect x="1186.25" y="288.5" width="13.0" height="13.0" fill="#21409a"/><rect x="1200.18" y="288.5" width="13.0" height="13.0" fill="#7f3f98"/><path d="M1118.1 276.5 h3.6 l1.3 1.6 h5 v7 h-9.9 z" fill="#b4b4b4"/><rect x="1118.1" y="279.5" width="9.9" height="0.8" fill="#888"/><path d="M1118.1 291.5 h3.6 l1.3 1.6 h5 v7 h-9.9 z" fill="#b4b4b4"/><rect x="1118.1" y="294.5" width="9.9" height="0.8" fill="#888"/></svg>
<svg style="left:1121px;top:380px" width="16" height="12" viewBox="0 0 16 12"><path d="M1.2 0.8 V10.4 M4 0.8 V10.4 M6.2 1.2 L9.4 10.4" stroke="#c6c6c6" stroke-width="1.6" fill="none"/><rect x="12.4" y="9" width="1.8" height="1.8" fill="#c6c6c6"/></svg>
<svg style="left:1147px;top:379px" width="15" height="14" viewBox="0 0 15 14"><rect x="4.2" y="1" width="9.6" height="11.4" fill="none" stroke="#c6c6c6" stroke-width="1.2"/><rect x="6.6" y="3.2" width="5" height="4" fill="#c6c6c6"/><path d="M1 3.4 h4 M0.6 9.4 h5.6 M4.6 7.2 l2.2 2.2 l-2.2 2.2" stroke="#c6c6c6" stroke-width="1.2" fill="none"/></svg>
<svg style="left:1206px;top:380px" width="17" height="12" viewBox="0 0 17 12"><rect x="0.6" y="0.6" width="2.8" height="2.8" fill="#c6c6c6"/><rect x="4.0" y="0.6" width="2.8" height="2.8" fill="#c6c6c6"/><rect x="7.3999999999999995" y="0.6" width="2.8" height="2.8" fill="#c6c6c6"/><rect x="0.6" y="4.0" width="2.8" height="2.8" fill="#c6c6c6"/><rect x="4.0" y="4.0" width="2.8" height="2.8" fill="#c6c6c6"/><rect x="7.3999999999999995" y="4.0" width="2.8" height="2.8" fill="#c6c6c6"/><rect x="0.6" y="7.3999999999999995" width="2.8" height="2.8" fill="#c6c6c6"/><rect x="4.0" y="7.3999999999999995" width="2.8" height="2.8" fill="#c6c6c6"/><rect x="7.3999999999999995" y="7.3999999999999995" width="2.8" height="2.8" fill="#c6c6c6"/><rect x="13.6" y="9" width="1.8" height="1.8" fill="#c6c6c6"/></svg>
<svg style="left:1233px;top:380px" width="13" height="13" viewBox="0 0 13 13"><rect x="0.8" y="0.8" width="11" height="10.6" fill="none" stroke="#c6c6c6" stroke-width="1.2"/><path d="M0.8 3.4 h11" stroke="#c6c6c6" stroke-width="1.1"/><rect x="4.4" y="5.4" width="5" height="4.4" fill="#c6c6c6"/></svg>
<svg style="left:1258px;top:380px" width="15" height="12" viewBox="0 0 15 12"><path d="M0.6 0.8 h4.8 l1.8 2 h6.8 v8 h-13.4 z" fill="#c6c6c6"/></svg>
<svg style="left:1286px;top:380px" width="13" height="13" viewBox="0 0 13 13"><rect x="0.8" y="0.8" width="11" height="10.6" fill="none" stroke="#c6c6c6" stroke-width="1.2"/><path d="M6.3 3.6 v5 M3.8 6.1 h5" stroke="#c6c6c6" stroke-width="1.3"/></svg>
<svg style="left:1311px;top:379.5px" width="12" height="13" viewBox="0 0 12 13"><path d="M0.6 2.8 h10.8 M4 2.8 v-1.8 h4 v1.8" fill="none" stroke="#c6c6c6" stroke-width="1.2"/><path d="M1.8 4.2 h8.4 l-0.6 8.2 h-7.2 z" fill="#c6c6c6"/><path d="M4.6 5.6 v5.4 M7.4 5.6 v5.4" stroke="#535353" stroke-width="0.9"/></svg>
<div style="left:1110.5px;top:396.4px;width:239px;height:7px;background:#4a4a4a;border-top:1px solid #3e3e3e"></div>
<div style="left:1220px;top:398.2px;width:19px;height:3px;background:transparent;border-top:1px dotted #363636;border-bottom:1px dotted #363636"></div>
<div style="left:1352px;top:64px;width:85px;height:12.8px;background:#474747;"></div>
<svg style="left:1376.5px;top:67.5px" width="9" height="6" viewBox="0 0 9 6"><path d="M3.8 0.8 L1.4 3 L3.8 5.2 M7.6 0.8 L5.2 3 L7.6 5.2" fill="none" stroke="#e8e8e8" stroke-width="1.25"/></svg>
<div style="left:1352px;top:76.8px;width:85px;height:1px;background:#3f3f3f;"></div>
<div style="left:1352px;top:77.5px;width:38px;height:953px;background:#535353;"></div>
<div style="left:1389.4px;top:77.5px;width:3px;height:953px;background:#414141;"></div>
<div style="left:1361.5px;top:80.3px;width:18.5px;height:3px;background:#464646;border-radius:1px"></div>
<svg style="left:1362.4px;top:92.5px" width="19.6" height="14.8" viewBox="0 0 22 17"><path d="M11.5 0.8 C5 0.8 0.8 4.8 0.8 9 C0.8 13.6 5.5 16.4 10.6 16.2 C12.6 16.1 13 14.8 12.4 13.8 C11.7 12.6 12.4 11.4 14 11.4 H17 C19.6 11.4 21.2 9.8 21.2 7.6 C21.2 3.6 16.8 0.8 11.5 0.8 Z" fill="#d0d0d0"/><circle cx="5" cy="9.8" r="1.5" fill="#535353"/><circle cx="7.2" cy="5.4" r="1.5" fill="#535353"/><circle cx="12" cy="3.8" r="1.5" fill="#535353"/><circle cx="16.6" cy="5.6" r="1.5" fill="#535353"/><circle cx="7.6" cy="13" r="1.3" fill="#535353"/></svg>
<svg style="left:1363.6px;top:119.6px" width="16.4" height="16.8" viewBox="0 0 18 18"><defs><linearGradient id="cg" x1="0" y1="0.2" x2="1" y2="0.9"><stop offset="0" stop-color="#1e1e1e"/><stop offset="1" stop-color="#f2f2f2"/></linearGradient></defs><path d="M1.5 1 C10 1.5 16.5 8 17 17 H1.5 Z" fill="url(#cg)" stroke="#d0d0d0" stroke-width="1.5"/></svg>
<div style="left:1352px;top:144.2px;width:37.5px;height:1.6px;background:#3e3e3e;"></div>
<div style="left:1361.5px;top:149.4px;width:18.5px;height:3px;background:#464646;border-radius:1px"></div>
<div style="left:1357.8px;top:158px;width:26px;height:21.2px;background:#363636;border-radius:2px"></div>
<svg style="left:1363px;top:163.5px" width="17" height="11.5" viewBox="0 0 17 11.5"><rect x="0" y="0" width="17" height="11.5" rx="1" fill="#dadada"/><rect x="1.6" y="1.4" width="4" height="3.7" fill="#8c8c8c"/><rect x="6.800000000000001" y="1.4" width="4" height="3.7" fill="#8c8c8c"/><rect x="12.0" y="1.4" width="4" height="3.7" fill="#8c8c8c"/><rect x="1.6" y="6.1" width="4" height="3.7" fill="#8c8c8c"/><rect x="6.800000000000001" y="6.1" width="4" height="3.7" fill="#8c8c8c"/><rect x="12.0" y="6.1" width="4" height="3.7" fill="#8c8c8c"/></svg>
<svg style="left:1363px;top:190.6px" width="18" height="12.2" viewBox="0 0 18 12.2"><defs><linearGradient id="gi"><stop offset="0" stop-color="#2e2e2e"/><stop offset="1" stop-color="#f4f4f4"/></linearGradient></defs><rect x="0.7" y="0.7" width="16.6" height="10.8" fill="url(#gi)" stroke="#d0d0d0" stroke-width="1.4"/></svg>
<svg style="left:1364.3px;top:215.2px" width="16" height="19.6" viewBox="0 0 16 19.6"><rect x="3.8" y="12" width="8.6" height="7.4" fill="#d0d0d0"/><path d="M8 12 V6 M5.2 12 L3.2 6.5 M10.8 12 L13 7.5" stroke="#d0d0d0" stroke-width="1.5"/><path d="M8 0.3 l1.7 3.4 l-1.7 2.6 l-1.7 -2.6 z" fill="#d0d0d0"/><ellipse cx="2.8" cy="5" rx="2" ry="2.8" fill="#d0d0d0" transform="rotate(-20 2.8 5)"/><path d="M10.5 6 l3 -2.6 l2.3 2 l-2.6 2.8 z" fill="#d0d0d0"/></svg>
<svg style="left:1363.8px;top:244.2px" width="16.4" height="17.2" viewBox="0 0 16.4 17.2"><circle cx="8.2" cy="4.4" r="3.9" fill="#d0d0d0"/><circle cx="4.2" cy="9.6" r="3.9" fill="#d0d0d0"/><circle cx="12.2" cy="9.6" r="3.9" fill="#d0d0d0"/><path d="M7.4 8 h1.6 v5.4 l2.6 3.4 h-6.8 l2.6 -3.4 z" fill="#d0d0d0"/></svg>
<div style="left:1352px;top:268.9px;width:37.5px;height:1.6px;background:#3e3e3e;"></div>
<div style="left:1361.5px;top:274.3px;width:18.5px;height:3px;background:#464646;border-radius:1px"></div>
<svg style="left:1362.8px;top:284.6px" width="19" height="19" viewBox="0 0 19 19"><circle cx="9.5" cy="9.5" r="6.2" fill="#d0d0d0"/><circle cx="9.5" cy="9.5" r="8.5" fill="none" stroke="#d0d0d0" stroke-width="1.5" stroke-dasharray="1.5 2.3"/></svg>
<svg style="left:1363.2px;top:314.2px" width="17.8" height="16.6" viewBox="0 0 17.8 16.6"><rect x="4.2" y="0.8" width="12.8" height="12.4" fill="none" stroke="#d0d0d0" stroke-width="1.5"/><rect x="2.6" y="9.6" width="6" height="6" fill="#535353" stroke="#d0d0d0" stroke-width="1.2"/><circle cx="3.6" cy="10.2" r="2.6" fill="#535353" stroke="#d0d0d0" stroke-width="1.2"/></svg>
<div style="left:1352px;top:337.1px;width:37.5px;height:1.6px;background:#3e3e3e;"></div>
<div style="left:1361.5px;top:343.2px;width:18.5px;height:3px;background:#464646;border-radius:1px"></div>
<svg style="left:1363.7px;top:354.6px" width="16.8" height="17.2" viewBox="0 0 16.8 17.2"><path d="M8.4 0.4 L16.4 5.6 L8.4 10.8 L0.4 5.6 Z" fill="#d0d0d0"/><path d="M0.4 10.4 L3 8.7 L8.4 12.2 L13.8 8.7 L16.4 10.4 L8.4 15.8 Z" fill="#d0d0d0"/></svg>
<svg style="left:1363.2px;top:381.0px" width="18.4" height="18.4" viewBox="0 0 18.4 18.4"><path d="M7.6 4 H1 V17.4 H14.6 V11" fill="none" stroke="#d0d0d0" stroke-width="1.7"/><path d="M8.8 9.8 L17 1.6 M11.4 1 H17.4 V7" fill="none" stroke="#d0d0d0" stroke-width="1.7"/></svg>
<svg style="left:1361.8px;top:408.8px" width="19.4" height="19" viewBox="0 0 19.4 19"><rect x="0.8" y="0.8" width="10.6" height="13.4" fill="none" stroke="#d0d0d0" stroke-width="1.3"/><rect x="5" y="7.8" width="13.6" height="10.4" fill="#646464" stroke="#d0d0d0" stroke-width="1.3"/></svg>
<div style="left:1352px;top:435px;width:37.5px;height:1.6px;background:#3e3e3e;"></div>
<div style="left:1361.5px;top:439.8px;width:18.5px;height:3px;background:#464646;border-radius:1px"></div>
<svg style="left:1363.3px;top:452.8px" width="17.6" height="13" viewBox="0 0 17.6 13"><rect x="0" y="0.2" width="17.6" height="1.1" fill="#d0d0d0"/><rect x="0" y="4" width="17.6" height="2.6" fill="#d0d0d0"/><rect x="0" y="9.4" width="17.6" height="3.4" fill="#d0d0d0"/></svg>
<div style="left:1352px;top:475.2px;width:37.5px;height:1.6px;background:#3e3e3e;"></div>
<div style="left:1361.5px;top:480.8px;width:18.5px;height:3px;background:#464646;border-radius:1px"></div>
<svg style="left:1361.8px;top:491.8px" width="18.6" height="18.6" viewBox="0 0 18.6 18.6"><circle cx="6.8" cy="6.8" r="6.2" fill="#d0d0d0"/><circle cx="11.6" cy="11.6" r="6" fill="#8c8c8c" stroke="#d0d0d0" stroke-width="1.2"/><circle cx="11" cy="11" r="3.6" fill="#7a7a7a"/></svg>
<div style="left:1352px;top:516.4px;width:37.5px;height:1.6px;background:#3e3e3e;"></div>
<div style="left:1392.3px;top:77.5px;width:45px;height:953px;background:#535353;"></div>
<span class="t" style="left:1402.7px;top:85.7px;font-size:10px;color:#f6f6f6;font-weight:bold;letter-spacing:-0.15px;">Properties</span>
<span class="t" style="left:1402.7px;top:116.6px;font-size:10px;color:#cacaca;font-weight:normal;letter-spacing:-0.25px;">Rectangle</span>
<div style="left:1392.3px;top:134px;width:45px;height:1.4px;background:#454545;"></div>
<span class="t" style="left:1403px;top:156.7px;font-size:10px;color:#d6d6d6;font-weight:normal;letter-spacing:-0.25px;">Transform</span>
<svg style="left:1402px;top:188.2px" width="20" height="20" viewBox="0 0 20 20"><rect x="0.8" y="0.8" width="4.2" height="4.2" fill="none" stroke="#d4d4d4" stroke-width="1"/><rect x="8.0" y="0.8" width="4.2" height="4.2" fill="none" stroke="#d4d4d4" stroke-width="1"/><rect x="15.200000000000001" y="0.8" width="4.2" height="4.2" fill="none" stroke="#d4d4d4" stroke-width="1"/><rect x="0.8" y="8.0" width="4.2" height="4.2" fill="none" stroke="#d4d4d4" stroke-width="1"/><rect x="8.0" y="8.0" width="4.2" height="4.2" fill="#f0f0f0" stroke="#d4d4d4" stroke-width="1"/><rect x="15.200000000000001" y="8.0" width="4.2" height="4.2" fill="none" stroke="#d4d4d4" stroke-width="1"/><rect x="0.8" y="15.200000000000001" width="4.2" height="4.2" fill="none" stroke="#d4d4d4" stroke-width="1"/><rect x="8.0" y="15.200000000000001" width="4.2" height="4.2" fill="none" stroke="#d4d4d4" stroke-width="1"/><rect x="15.200000000000001" y="15.200000000000001" width="4.2" height="4.2" fill="none" stroke="#d4d4d4" stroke-width="1"/><path d="M5 2.9 h3 M12.2 2.9 h3 M5 17.3 h3 M12.2 17.3 h3 M2.9 5 v3 M2.9 12.2 v3 M17.3 5 v3 M17.3 12.2 v3" stroke="#d4d4d4" stroke-width="1"/></svg>
<span class="t" style="left:1432px;top:180.8px;font-size:10px;color:#d6d6d6;font-weight:normal;letter-spacing:-0.3px;">X</span>
<span class="t" style="left:1432px;top:206.7px;font-size:10px;color:#d6d6d6;font-weight:normal;letter-spacing:-0.3px;">Y</span>
<svg style="left:1427px;top:230.3px" width="12" height="10" viewBox="0 0 12 10"><path d="M12 9 H0.8 L10.5 1.6" fill="none" stroke="#d0d0d0" stroke-width="1.3"/></svg>
<div style="left:1392.3px;top:263.2px;width:45px;height:1.4px;background:#454545;"></div>
<svg style="left:1405.5px;top:291.0px" width="12" height="8" viewBox="0 0 12 8"><path d="M1.2 1.4 L6 6.2 L10.8 1.4" fill="none" stroke="#e6e6e6" stroke-width="1.6"/></svg>
<span class="t" style="left:1426.2px;top:289.4px;font-size:10px;color:#e0e0e0;font-weight:normal;letter-spacing:-0.25px;">Text</span>
<span class="t" style="left:1403px;top:316.5px;font-size:10px;color:#d6d6d6;font-weight:normal;letter-spacing:-0.5px;">Type</span>
<div style="left:1402.5px;top:335.4px;width:40px;height:24.8px;background:#4b4b4b;border:1px solid #464646;border-radius:2px"></div>
<svg style="left:1406.5px;top:341.3px" width="15.6" height="15.2" viewBox="0 0 18 18"><g fill="#e2e2e2"><ellipse cx="9" cy="4" rx="1.9" ry="3.6"/><ellipse cx="9" cy="4" rx="1.9" ry="3.6" transform="rotate(72 9 9)"/><ellipse cx="9" cy="4" rx="1.9" ry="3.6" transform="rotate(144 9 9)"/><ellipse cx="9" cy="4" rx="1.9" ry="3.6" transform="rotate(216 9 9)"/><ellipse cx="9" cy="4" rx="1.9" ry="3.6" transform="rotate(288 9 9)"/></g><circle cx="9" cy="9" r="1.5" fill="#4b4b4b"/><path d="M10.5 10.5 L15.5 15.5" stroke="#e2e2e2" stroke-width="1.2"/></svg>
<span class="t" style="left:1432.4px;top:343.6px;font-size:10px;color:#f6f6f6;font-weight:bold;letter-spacing:-0.3px;">S</span>
<div style="left:1403px;top:367.4px;width:40px;height:208.8px;background:#484848;border:1px solid #434343;border-radius:2px"></div>
<svg style="left:1413.6px;top:380.6px" width="10.6" height="10.6" viewBox="0 0 14 14"><circle cx="7" cy="7" r="3.5" fill="none" stroke="#e4e4e4" stroke-width="2.4"/><circle cx="7" cy="7" r="5.7" fill="none" stroke="#e4e4e4" stroke-width="2.2" stroke-dasharray="2.2 2.27"/></svg>
<span class="t" style="left:1430.8px;top:381.0px;font-size:10px;color:#e4e4e4;font-weight:normal;letter-spacing:-0.3px;">S</span>
<div style="left:1412.7px;top:407.4px;width:30px;height:1px;background:#5e5e5e;"></div>
<div style="left:1412.5px;top:422.8px;width:30px;height:24.8px;background:#4c4c4c;border:1px solid #5c5c5c;border-radius:2px"></div>
<div style="left:1412.7px;top:463.2px;width:12.7px;height:12.7px;background:#494949;border:1.2px solid #cdcdcd;border-radius:2px"></div>
<span class="t" style="left:1432.6px;top:465.0px;font-size:10px;color:#d6d6d6;font-weight:normal;letter-spacing:-0.3px;">M</span>
<div style="left:1412.7px;top:493.6px;width:30px;height:1px;background:#5e5e5e;"></div>
<span class="t" style="left:1412.7px;top:514.2px;font-size:10px;color:#d6d6d6;font-weight:normal;letter-spacing:-0.25px;">Detail</span>
<div style="left:1413.3px;top:537.4px;width:30px;height:1.8px;background:#868686;"></div>
<span class="t" style="left:1412.7px;top:548.1px;font-size:10px;color:#d6d6d6;font-weight:normal;letter-spacing:-0.25px;">Minimum</span>
<span class="t" style="left:1402.8px;top:587.2px;font-size:10px;color:#d6d6d6;font-weight:normal;letter-spacing:-0.25px;">Prompt</span>
<div style="left:1402.5px;top:605px;width:40px;height:40.4px;background:#484848;border:1px solid #434343;border-radius:2px"></div>
<span class="t" style="left:1407.7px;top:607.85px;font-size:9.7px;color:#ececec;font-weight:normal;letter-spacing:-0.2px;">Describe</span>
<span class="t" style="left:1407.7px;top:619.45px;font-size:9.7px;color:#ececec;font-weight:normal;letter-spacing:-0.2px;">generate</span>
<div style="left:1402.5px;top:651.4px;width:40px;height:27px;background:#5a5a5a;border-radius:2px"></div>
<span class="t" style="left:1402.8px;top:692.8px;font-size:10px;color:#d6d6d6;font-weight:normal;letter-spacing:-0.3px;">Sample p</span>
<svg style="left:1416px;top:717.8px" width="21" height="50" viewBox="0 0 21 50"><path d="M19 1 C14 7 10 15 7.5 25 L0.8 38.5 L4 44.5 L12 42 L16.5 49.5 L21 46 V1 Z" fill="#f4f6f8"/><path d="M19.5 3.5 C15 9.5 11.5 17 9.5 26 L5 35 L12.5 38.5 L21 38.5 V3 Z" fill="#21b2d6"/><path d="M1.2 38.6 L6 33 L11 38.4 L6 44 Z" fill="#141414"/><circle cx="3.6" cy="40.4" r="1" fill="#e84a4a"/><circle cx="16.8" cy="14.6" r="4.2" fill="#1c2a78"/><circle cx="16.6" cy="14.4" r="3" fill="#f6b02a"/><circle cx="16" cy="14" r="1.4" fill="#f8de4a"/><rect x="13" y="24.6" width="2" height="9" fill="#f2ea3a"/><rect x="16" y="24.6" width="2" height="9" fill="#9ad23a"/><rect x="19" y="24.6" width="2" height="9" fill="#f2ea3a"/><path d="M12.5 39 L17 49.6 L21 42 V39 Z" fill="#f8b820"/><path d="M15 39 L17.4 44 L20 39 Z" fill="#e04a24"/></svg>
<span class="t" style="left:1403.7px;top:785.28px;font-size:9px;color:#cccccc;font-weight:normal;letter-spacing:-0.42px;">colorful sp</span>
<svg style="left:1406.2px;top:858.0px" width="16" height="16" viewBox="0 0 16 16"><circle cx="8" cy="8" r="6.5" fill="none" stroke="#d4d4d4" stroke-width="1.2"/><path d="M6.6 7 h1.6 V11.4 M6.4 11.5 h3.4" fill="none" stroke="#d4d4d4" stroke-width="1.3"/><circle cx="7.9" cy="4.6" r="0.95" fill="#d4d4d4"/></svg>
<div style="left:1392.3px;top:879.8px;width:45px;height:1.4px;background:#454545;"></div>
<span class="t" style="left:1402.8px;top:903.2px;font-size:10px;color:#d6d6d6;font-weight:normal;letter-spacing:-0.25px;">Appearance</span>
<div style="left:1402.8px;top:926.6px;width:17.2px;height:17px;background:#fff;border:1px solid #3a3a3a"></div>
<span class="t" style="left:1432.6px;top:932.1px;font-size:10px;color:#d6d6d6;font-weight:normal;letter-spacing:-0.3px;">F</span>
<div style="left:1402.8px;top:955.7px;width:17.2px;height:16.4px;background:#fff;border:1px solid #3a3a3a"></div>
<div style="left:1407.9px;top:960px;width:7.2px;height:7.6px;background:#6e1c14;"></div>
<svg style="left:1402.3px;top:956.0px" width="18.2" height="17.4" viewBox="0 0 18.2 17.4"><path d="M1 16.4 L17.2 1" stroke="#e8202a" stroke-width="2"/></svg>
<span class="t" style="left:1432.6px;top:960.9px;font-size:10px;color:#f4f4f4;font-weight:bold;letter-spacing:-0.3px;border-bottom:1px dotted #c8c8c8;padding-bottom:1px">S</span>
<svg style="left:1403px;top:985.8px" width="17.2" height="15.6" viewBox="0 0 17.2 15.6"><rect x="0.6" y="0.6" width="16" height="14.4" fill="#5e5e5e" stroke="#a2a2a2" stroke-width="1.2"/><rect x="2.0" y="2.0" width="3.3" height="2.9" fill="#787878"/><rect x="8.6" y="2.0" width="3.3" height="2.9" fill="#787878"/><rect x="5.3" y="4.9" width="3.3" height="2.9" fill="#787878"/><rect x="11.899999999999999" y="4.9" width="3.3" height="2.9" fill="#787878"/><rect x="2.0" y="7.8" width="3.3" height="2.9" fill="#787878"/><rect x="8.6" y="7.8" width="3.3" height="2.9" fill="#787878"/><rect x="5.3" y="10.7" width="3.3" height="2.9" fill="#787878"/><rect x="11.899999999999999" y="10.7" width="3.3" height="2.9" fill="#787878"/></svg>
<span class="t" style="left:1432.6px;top:989.9px;font-size:10px;color:#f0f0f0;font-weight:normal;letter-spacing:-0.3px;border-bottom:1px dotted #c8c8c8;padding-bottom:1px">O</span>
<span class="t" style="left:1410px;top:1018.5px;font-size:13px;font-style:italic;color:#d4d4d4;font-family:'Liberation Serif',serif;letter-spacing:-0.5px">fx</span>
<div style="left:0px;top:1014px;width:1350px;height:16px;background:#4f4f4f;"></div>
<div style="left:0px;top:1013.5px;width:1333px;height:1px;background:#555;"></div>
<div style="left:0px;top:1015px;width:26px;height:15px;background:#454545;"></div>
<div style="left:26px;top:1015px;width:1px;height:15px;background:#3e3e3e;"></div>
<div style="left:45px;top:1015px;width:1px;height:15px;background:#3e3e3e;"></div>
<div style="left:86px;top:1015px;width:1px;height:15px;background:#3e3e3e;"></div>
<svg style="left:28.5px;top:1019.5px" width="12" height="8" viewBox="0 0 12 8"><path d="M2 2 L6.0 6 L10 2" fill="none" stroke="#e6e6e6" stroke-width="1.6" stroke-linecap="round" stroke-linejoin="round"/></svg>
<svg style="left:52px;top:1018px" width="30" height="10" viewBox="0 0 30 10"><path d="M2 1 L7 5 L2 9 Z M17 1 L22 5 L17 9 Z" fill="#686868"/><rect x="23" y="1" width="1.5" height="8" fill="#686868"/></svg>
<span class="t" style="left:152px;top:1018.8px;font-size:11px;color:#c8c8c8;font-weight:normal;letter-spacing:-0.602px;">Direct Selection</span>
<svg style="left:291px;top:1017px" width="8" height="11" viewBox="0 0 8 11"><path d="M1 0.5 L7 5.5 L1 10.5 Z" fill="#d8d8d8"/></svg>
<div style="left:303px;top:1014px;width:1030px;height:16px;background:#4b4b4b;"></div>
<svg style="left:308px;top:1017px" width="8" height="10" viewBox="0 0 8 10"><path d="M6 1 L2 5 L6 9" fill="none" stroke="#8a8a8a" stroke-width="1.2"/></svg>
<svg style="left:1321px;top:1017px" width="8" height="10" viewBox="0 0 8 10"><path d="M2 1 L6 5 L2 9" fill="none" stroke="#9a9a9a" stroke-width="1.2"/></svg>
<div style="left:811px;top:1015.5px;width:26px;height:13px;background:#616161;border-radius:7px"></div>
<div id="taskbar" style="left:0;top:1029.4px;width:1437px;height:49px;background:linear-gradient(90deg,#dce4f4 0%,#dee5f4 40%,#dbe1f1 72%,#dfe6f3 86%,#e5eef7 100%);border-top:1px solid #5e6066"></div>
<div style="left:855px;top:1034px;width:40px;height:44px;background:#fbeaec;border-radius:5px"></div>
<div style="left:1120px;top:1036px;width:37px;height:39px;background:#eef2f9;border-radius:5px;border:1px solid #e6ebf3"></div>
<svg style="left:-12.0px;top:1042.0px" width="24" height="24" viewBox="0 0 24 24"><circle cx="6" cy="9" r="7.5" fill="none" stroke="#111" stroke-width="2.2"/><path d="M11.5 14.5 L18 21" stroke="#111" stroke-width="2.6" stroke-linecap="round"/></svg>
<svg style="left:28.0px;top:1042.0px" width="24" height="24" viewBox="0 0 24 24"><rect x="7.5" y="2" width="16" height="14" rx="1.5" fill="#f4f6fa"/><rect x="1" y="7" width="17" height="16" rx="1" fill="#1d1d1f"/><rect x="5.5" y="7" width="12.5" height="11.5" fill="#bdbfc4"/><rect x="7.5" y="7" width="10.5" height="9" fill="#d4d6da"/></svg>
<svg style="left:72.0px;top:1042.0px" width="24" height="24" viewBox="0 0 24 24"><rect x="6" y="2" width="18" height="21" rx="1.5" fill="#2b7cd3"/><rect x="6" y="2" width="18" height="5.5" fill="#41a5ee"/><rect x="6" y="12.5" width="18" height="5.3" fill="#185abd"/><rect x="6" y="17.8" width="18" height="5.2" fill="#103f91"/><rect x="0" y="6" width="12" height="13" rx="1" fill="#185abd"/><text x="6" y="16.3" font-family="Liberation Sans, sans-serif" font-size="9.5" font-weight="bold" fill="#fff" text-anchor="middle">W</text></svg>
<svg style="left:116.0px;top:1042.0px" width="24" height="24" viewBox="0 0 24 24"><circle cx="19" cy="8" r="3.2" fill="#5059c9"/><rect x="14" y="10.5" width="10" height="10" rx="3" fill="#5059c9"/><circle cx="12.5" cy="6.5" r="4" fill="#7b83eb"/><path d="M6 11 h13 v8 a5 5 0 0 1 -5 5 h-3 a5 5 0 0 1 -5 -5 z" fill="#7b83eb"/><rect x="0" y="7" width="11.5" height="11.5" rx="1" fill="#fbfbfe"/><text x="5.7" y="16.3" font-family="Liberation Sans, sans-serif" font-size="9.5" font-weight="bold" fill="#4b4f8a" text-anchor="middle">T</text></svg>
<svg style="left:129.5px;top:1037.5px" width="16" height="16" viewBox="0 0 16 16"><circle cx="8" cy="8" r="7.6" fill="#0f6cbd"/><text x="8" y="12" font-family="Liberation Sans, sans-serif" font-size="11" font-weight="bold" fill="#fff" text-anchor="middle">1</text></svg>
<svg style="left:160.0px;top:1042.0px" width="24" height="24" viewBox="0 0 24 24"><path d="M0 3.5 a1.5 1.5 0 0 1 1.5 -1.5 h7 l2 2.5 h12 a1.5 1.5 0 0 1 1.5 1.5 v15 a1.5 1.5 0 0 1 -1.5 1.5 h-21 a1.5 1.5 0 0 1 -1.5 -1.5 z" fill="#e9a820"/><rect x="0" y="6" width="24" height="16.5" rx="1.5" fill="#ffd251"/><path d="M5 22.5 v-6 a2 2 0 0 1 2 -2 h10 a2 2 0 0 1 2 2 v6 z" fill="#1b80d6"/><rect x="8" y="17.5" width="8" height="1.5" fill="#0f5fa8"/></svg>
<div style="left:170.0px;top:1070.3px;width:5px;height:2.4px;background:#8a8f98;border-radius:1.2px"></div>
<div style="left:214.0px;top:1070.3px;width:5px;height:2.4px;background:#8a8f98;border-radius:1.2px"></div>
<svg style="left:204.0px;top:1042.0px" width="24" height="24" viewBox="0 0 24 24"><defs><linearGradient id="eg1" x1="0" y1="0" x2="1" y2="1"><stop offset="0" stop-color="#35c1f1"/><stop offset="1" stop-color="#0c59a4"/></linearGradient><linearGradient id="eg2" x1="0" y1="0" x2="1" y2="0"><stop offset="0" stop-color="#2ab6e6"/><stop offset="1" stop-color="#5fd64a"/></linearGradient></defs><circle cx="12" cy="12" r="12" fill="url(#eg1)"/><path d="M1 9 C3 2 10 -1 16 1 C21 2.5 24 7 24 11 C24 15 21 17 18 17 C15.5 17 14.5 15.5 15.5 14 C16.5 12 15 9 11.5 9 C7 9 4 12.5 4.5 17 C1.5 15 0 12 1 9 Z" fill="url(#eg2)"/><path d="M4.5 17 C4 12.5 7 9.2 11.5 9.2 C13.5 9.2 15 10.2 15.6 11.6 C12 10.6 9 13 9.4 17 C9.8 20.5 13 23 17 22.8 C13 25 7 23.5 4.5 17 Z" fill="#0b4f9a"/><path d="M15.5 14 C14.5 15.5 15.5 17 18 17 C20 17 22 16 23.2 14 C22 19 18 22 14 21.5 C11 20.5 9.5 18 10 15.5 C10.5 13 13 12 15.5 14 Z" fill="#f0f6fb"/></svg>
<svg style="left:248.0px;top:1043.0px" width="24" height="24" viewBox="0 0 24 24"><path d="M7.5 6 v-2.5 a2.5 2.5 0 0 1 2.5 -2.5 h4 a2.5 2.5 0 0 1 2.5 2.5 v2.5" fill="none" stroke="#2a8ad4" stroke-width="1.8"/><path d="M0.5 5.5 h23 v15 a3 3 0 0 1 -3 3 h-17 a3 3 0 0 1 -3 -3 z" fill="#0f5aa8"/><rect x="7" y="9" width="4.6" height="4.6" fill="#f25022"/><rect x="12.4" y="9" width="4.6" height="4.6" fill="#7fba00"/><rect x="7" y="14.4" width="4.6" height="4.6" fill="#00a4ef"/><rect x="12.4" y="14.4" width="4.6" height="4.6" fill="#ffb900"/></svg>
<svg style="left:292.0px;top:1042.0px" width="24" height="24" viewBox="0 0 24 24"><rect x="0" y="3.5" width="24" height="17" rx="4.5" fill="#ff0f1a"/><path d="M9.5 8 L16 12 L9.5 16 Z" fill="#fff"/></svg>
<svg style="left:335.6px;top:1042.0px" width="24" height="24" viewBox="0 0 24 24"><ellipse cx="12" cy="12" rx="10.9" ry="10.7" fill="#e8112d"/><ellipse cx="12" cy="12" rx="4.8" ry="8" fill="#dfe7f4"/><path d="M12 1.3 A10.9 10.7 0 0 1 12 22.7 A8.6 10.7 0 0 0 12 1.3 Z" fill="#a70014" opacity="0.55"/></svg>
<svg style="left:379.0px;top:1042.0px" width="24" height="24" viewBox="0 0 24 24"><path d="M12 1.5 A10.3 10.3 0 0 0 3.2 17.2 L1.5 22.8 L7.3 21.2 A10.3 10.3 0 1 0 12 1.5 Z" fill="#e4f2ea" stroke="#1f9a5a" stroke-width="2.2"/><path d="M8.2 6.8 C7.2 7.2 6.6 8.4 7 9.8 C7.8 12.6 10.6 15.8 13.8 17 C15.2 17.5 16.6 17 17.2 15.8 L17.3 14.8 L14.8 13.5 L13.6 14.6 C12 14 10.3 12.2 9.6 10.6 L10.6 9.4 L9.4 6.8 Z" fill="#1f9a5a"/></svg>
<svg style="left:393.0px;top:1037.5px" width="16" height="16" viewBox="0 0 16 16"><circle cx="8" cy="8" r="7.6" fill="#1a73d9"/><text x="8" y="12" font-family="Liberation Sans, sans-serif" font-size="11" font-weight="bold" fill="#fff" text-anchor="middle">1</text></svg>
<svg style="left:423.5px;top:1042.0px" width="24" height="24" viewBox="0 0 24 24"><rect x="6" y="2" width="18" height="21" rx="1.5" fill="#21a366"/><rect x="6" y="2" width="9" height="5.5" fill="#21a366"/><rect x="15" y="2" width="9" height="5.5" fill="#33c481"/><rect x="6" y="7.5" width="9" height="5.2" fill="#107c41"/><rect x="15" y="7.5" width="9" height="5.2" fill="#21a366"/><rect x="6" y="12.7" width="18" height="5.2" fill="#185c37"/><rect x="15" y="12.7" width="9" height="5.2" fill="#107c41"/><rect x="6" y="17.9" width="18" height="5.1" fill="#185c37"/><rect x="0" y="6" width="12" height="13" rx="1" fill="#107c41"/><text x="6" y="16.3" font-family="Liberation Sans, sans-serif" font-size="9.5" font-weight="bold" fill="#fff" text-anchor="middle">X</text></svg>
<svg style="left:468.0px;top:1042.0px" width="24" height="24" viewBox="0 0 24 24"><rect x="0" y="0" width="24" height="24" fill="#0a0a0a"/><path d="M5 8 L8 4.5 H16 L19 8 V9 H5 Z" fill="#fff"/><path d="M5 16 L8 19.5 H16 L19 16 V15 H5 Z" fill="#fff"/><rect x="3" y="10" width="18" height="4" fill="#fff"/><rect x="9" y="8.5" width="6" height="7" fill="#d6111e"/><rect x="1" y="15" width="8" height="8" fill="#f5a21b"/><rect x="2.5" y="17.5" width="5" height="3" fill="#d6111e"/></svg>
<svg style="left:512.0px;top:1042.0px" width="24" height="24" viewBox="0 0 24 24"><rect x="0" y="0" width="24" height="24" rx="2" fill="#0d1a22"/><path d="M0 0 h10 l-10 10 z" fill="#1d5a78"/><path d="M5 8 L8 4.5 H16 L19 8 V9 H5 Z" fill="#fff"/><path d="M5 16 L8 19.5 H16 L19 16 V15 H5 Z" fill="#fff"/><rect x="3" y="10" width="18" height="4" fill="#fff"/><rect x="9" y="8.5" width="6" height="7" fill="#d6111e"/></svg>
<svg style="left:556.0px;top:1042.0px" width="24" height="24" viewBox="0 0 24 24"><rect x="0" y="0" width="24" height="24" rx="1" fill="#e3101e"/><g transform="translate(2.4,-1) scale(0.8)"><path d="M5 8 L8 4.5 H16 L19 8 V9 H5 Z" fill="#fff"/><path d="M5 16 L8 19.5 H16 L19 16 V15 H5 Z" fill="#fff"/><rect x="3" y="10" width="18" height="4" fill="#fff"/><rect x="9" y="8.5" width="6" height="7" fill="#e3101e"/><rect x="10.5" y="10" width="3" height="4" fill="#fff"/></g><rect x="1" y="17" width="22" height="6" fill="#fff"/><rect x="3" y="18.5" width="4" height="3" fill="#e3101e"/><rect x="9" y="19.3" width="11" height="1.4" fill="#bbb"/></svg>
<svg style="left:600.0px;top:1042.0px" width="24" height="24" viewBox="0 0 24 24"><defs><linearGradient id="dg" x1="0" y1="0" x2="0" y2="1"><stop offset="0" stop-color="#0a1440"/><stop offset="1" stop-color="#12307a"/></linearGradient></defs><rect x="0" y="0" width="24" height="24" fill="url(#dg)"/><path d="M4 12 C8 6.5 16 6 20.5 10" fill="none" stroke="#9fc4f0" stroke-width="0.9"/><text x="11.5" y="17" font-family="Liberation Sans, sans-serif" font-size="5.6" font-weight="bold" font-style="italic" fill="#fff" text-anchor="middle" textLength="17.5" lengthAdjust="spacingAndGlyphs">Disney+</text></svg>
<svg style="left:644.0px;top:1042.0px" width="24" height="24" viewBox="0 0 24 24"><circle cx="12" cy="12" r="12" fill="#fbc116"/><path d="M12 12 L1.6 6 A12 12 0 0 1 22.4 6 Z" fill="#e33b2e"/><path d="M12 12 L1.6 6 A12 12 0 0 0 12 24 L17.5 14.5 Z" fill="#2da94f"/><path d="M12 12 h10.4 A12 12 0 0 0 22.4 6 H12 Z" fill="#e33b2e"/><circle cx="12" cy="12" r="5.6" fill="#fff"/><circle cx="12" cy="12" r="4.4" fill="#3f7fe8"/></svg>
<svg style="left:687.0px;top:1042.0px" width="24" height="24" viewBox="0 0 24 24"><rect x="0" y="0" width="24" height="24" fill="#0a0a0a"/><text x="12" y="18.5" font-family="Liberation Sans, sans-serif" font-size="18" font-weight="bold" fill="#d2101c" text-anchor="middle" textLength="9" lengthAdjust="spacingAndGlyphs">N</text></svg>
<svg style="left:731.0px;top:1042.0px" width="24" height="24" viewBox="0 0 24 24"><defs><linearGradient id="sk" x1="0" y1="0" x2="1" y2="1"><stop offset="0" stop-color="#5aa0ff"/><stop offset="1" stop-color="#0a3cd2"/></linearGradient></defs><rect x="0" y="0" width="24" height="24" rx="5" fill="#fdfdff"/><path d="M0 11.5 h24 v7.5 a5 5 0 0 1 -5 5 h-14 a5 5 0 0 1 -5 -5 z" fill="url(#sk)"/><text x="12" y="9" font-family="Liberation Sans, sans-serif" font-size="9.5" font-weight="bold" fill="#1a3ec8" text-anchor="middle" letter-spacing="-0.4">sky</text><path d="M10 14.5 L15 17.7 L10 21 Z" fill="#fff"/></svg>
<svg style="left:775.0px;top:1042.0px" width="24" height="24" viewBox="0 0 24 24"><rect x="2" y="0" width="20" height="24" rx="1" fill="#37a5b4"/><path d="M2 0 h4 v24 h-4 z" fill="#2a8896"/><text x="12.5" y="14" font-family="Liberation Sans, sans-serif" font-size="14" font-weight="bold" fill="#fff" text-anchor="middle">M</text><rect x="3" y="17" width="19" height="6.5" fill="#1d4d58"/><text x="12.5" y="22.6" font-family="Liberation Sans, sans-serif" font-size="6" font-weight="bold" fill="#fff" text-anchor="middle">AYA</text></svg>
<svg style="left:819.0px;top:1041.5px" width="24" height="24" viewBox="0 0 24 24"><rect x="1.5" y="1.5" width="21" height="21" rx="4" fill="#49021f"/><text x="12" y="16.6" font-family="Liberation Sans, sans-serif" font-size="12" font-weight="bold" fill="#ff3d6e" text-anchor="middle" letter-spacing="-0.2">Id</text></svg>
<svg style="left:863.0px;top:1041.5px" width="24" height="24" viewBox="0 0 24 24"><rect x="1.5" y="1.5" width="21" height="21" rx="4" fill="#001e36"/><text x="12" y="16.5" font-family="Liberation Sans, sans-serif" font-size="12" font-weight="bold" fill="#31a8ff" text-anchor="middle" letter-spacing="-0.3">Ps</text></svg>
<div style="left:873.0px;top:1070.3px;width:5px;height:2.4px;background:#c4343c;border-radius:1.2px"></div>
<svg style="left:907.0px;top:1042.0px" width="24" height="24" viewBox="0 0 24 24"><rect x="3" y="0.5" width="18" height="23.5" rx="1.5" fill="#8a99a8"/><rect x="5" y="2.5" width="14" height="4.5" fill="#5fc4e4"/><g fill="#e8ecf0"><rect x="5" y="9" width="4" height="3.8"/><rect x="10" y="9" width="4" height="3.8"/><rect x="15" y="9" width="4" height="3.8"/><rect x="5" y="14" width="4" height="3.8"/><rect x="10" y="14" width="4" height="3.8"/><rect x="5" y="19" width="4" height="3.8"/><rect x="10" y="19" width="4" height="3.8"/></g><rect x="15" y="14" width="4" height="8.8" fill="#2e5f8a"/></svg>
<div style="left:917.0px;top:1070.3px;width:5px;height:2.4px;background:#8a8f98;border-radius:1.2px"></div>
<svg style="left:952.0px;top:1042.0px" width="24" height="24" viewBox="0 0 24 24"><path d="M12 0.5 L23 5 V18 L12 23.5 L1 18 V5 Z" fill="#d1202a"/><path d="M12 0.5 L23 5 L12 10 L1 5 Z" fill="#e84a4a"/><path d="M12 10 L23 5 V18 L12 23.5 Z" fill="#a8141c"/><text x="11.5" y="17" font-family="Liberation Sans, sans-serif" font-size="12" font-weight="bold" fill="#fff" text-anchor="middle" letter-spacing="0.6">SW</text><rect x="12" y="17.5" width="12" height="6" rx="1" fill="#2a2a2a"/><text x="18" y="22.6" font-family="Liberation Sans, sans-serif" font-size="5.5" font-weight="bold" fill="#fff" text-anchor="middle">2024</text></svg>
<svg style="left:995.0px;top:1042.0px" width="24" height="24" viewBox="0 0 24 24"><path d="M12 0.5 L22 6 V18 L12 23.5 L2 18 V6 Z" fill="#a80f16"/><path d="M12 2.5 L20 7 V17 L12 21.5 L4 17 V7 Z" fill="#8a0a10"/><circle cx="12" cy="6.3" r="1.9" fill="#f2f2f2"/><rect x="10.2" y="9.3" width="3.6" height="10" rx="1" fill="#e8e8e8"/></svg>
<svg style="left:1039.0px;top:1042.0px" width="24" height="24" viewBox="0 0 24 24"><rect x="0" y="0" width="24" height="24" rx="4" fill="#2243b8"/><path d="M4.5 3.5 h15 l-2 4.5 h-11 z" fill="#fff"/><path d="M7 9.5 h10 l3.5 7 h-17 z" fill="#fff"/><path d="M8.5 11 h7 l2 4 h-11 z" fill="#2a66d8"/><rect x="3.5" y="17.5" width="17" height="3.5" rx="0.8" fill="#fff"/></svg>
<svg style="left:1083.0px;top:1042.0px" width="24" height="24" viewBox="0 0 24 24"><rect x="0" y="0" width="24" height="24" fill="#0a0a0a"/><path d="M3 0 L0 7 V13 L4 11 L7 15 L3 24 H0 V13" fill="#fff"/><path d="M5 0 L2.5 9 L6 10 L9 4 L11 8 L14 10 L20 14 L24 14 V19 L18 24 H14 L15 19 L8 17 L4.5 11 L3 8 L4 0 Z" fill="#f4f4f4"/><path d="M9 17 L15 19.5 L14 24 H6 Z" fill="#0a0a0a"/><text x="19.5" y="9.5" font-family="Liberation Sans, sans-serif" font-size="10" fill="#fff" text-anchor="middle">7</text></svg>
<svg style="left:1127.0px;top:1041.5px" width="24" height="24" viewBox="0 0 24 24"><rect x="1.5" y="1.5" width="21" height="21" rx="4" fill="#330000"/><text x="12" y="16.8" font-family="Liberation Sans, sans-serif" font-size="12.5" font-weight="bold" fill="#ff9a00" text-anchor="middle" letter-spacing="-0.2">Ai</text></svg>
<div style="left:1131px;top:1070.3px;width:15.5px;height:2.8px;background:#0a64c2;border-radius:1.4px"></div>
<svg style="left:1171.0px;top:1042.0px" width="24" height="24" viewBox="0 0 24 24"><circle cx="12" cy="12" r="12" fill="#76b83f"/><circle cx="12" cy="12" r="10" fill="#8cc656"/><text x="12.5" y="18" font-family="Liberation Sans, sans-serif" font-size="21" font-weight="bold" fill="#fff" text-anchor="middle">µ</text></svg>
<div style="left:1181.0px;top:1070.3px;width:5px;height:2.4px;background:#8a8f98;border-radius:1.2px"></div>
<svg style="left:1215.0px;top:1041.5px" width="24" height="24" viewBox="0 0 24 24"><rect x="1" y="1.5" width="22" height="21" rx="4" fill="#b30b00"/><path d="M12 5 C10 5 10.8 9.5 12.6 12.8 C14.6 16.2 18.5 17.6 19 15.8 C19.5 14 14 13.5 10 15 C6.5 16.3 4.5 19 6 19.5 C8 20 12.8 9.5 12 5 Z" fill="none" stroke="#fff" stroke-width="1.5" stroke-linejoin="round"/></svg>
<div style="left:1225.0px;top:1070.3px;width:5px;height:2.4px;background:#8a8f98;border-radius:1.2px"></div>
<svg style="left:1314.3px;top:1047.3px" width="15" height="14" viewBox="0 0 15 14"><path d="M2.4 9 L7.5 4 L12.6 9" fill="none" stroke="#1a1a1a" stroke-width="1.5" stroke-linecap="round" stroke-linejoin="round"/></svg>
<svg style="left:1343.0px;top:1043.5px" width="20" height="20" viewBox="0 0 20 20"><path d="M5.8 13.6 a3 3 0 0 1 0.2 -6 a3.9 3.9 0 0 1 7.5 0.2 a2.8 2.8 0 0 1 1 5.8 z" fill="#a4a4a4" stroke="#222" stroke-width="1.3"/><circle cx="14.4" cy="14.8" r="4.6" fill="#d9232e"/><path d="M12.8 13.2 L16 16.4 M16 13.2 L12.8 16.4" stroke="#fff" stroke-width="1.4"/></svg>
<svg style="left:1377.0px;top:1046.5px" width="18" height="15" viewBox="0 0 18 15"><rect x="2.5" y="1" width="13" height="11" fill="#29a3e6"/><rect x="4.5" y="2.5" width="9" height="3.5" fill="#43b8f4"/><path d="M0.5 10 h17 l-2.5 2 h-12 z" fill="#1680c8"/><rect x="6" y="12" width="6" height="2.2" fill="#1473bb"/></svg>
<svg style="left:1411.0px;top:1044.6px" width="15" height="18" viewBox="0 0 15 18"><rect x="3.3" y="0.8" width="4.6" height="4.4" fill="#d0d0d0" stroke="#222" stroke-width="1"/><path d="M4.6 2.4 h0.8 M6 2.4 h0.8" stroke="#222" stroke-width="0.9"/><rect x="1.7" y="5.2" width="7.8" height="11.4" rx="1.6" fill="#e8eef6" stroke="#222" stroke-width="1.2"/><path d="M7.6 14.2 L9.4 16 L13.4 11.6" fill="none" stroke="#222" stroke-width="1.1"/></svg>
</body></html>
